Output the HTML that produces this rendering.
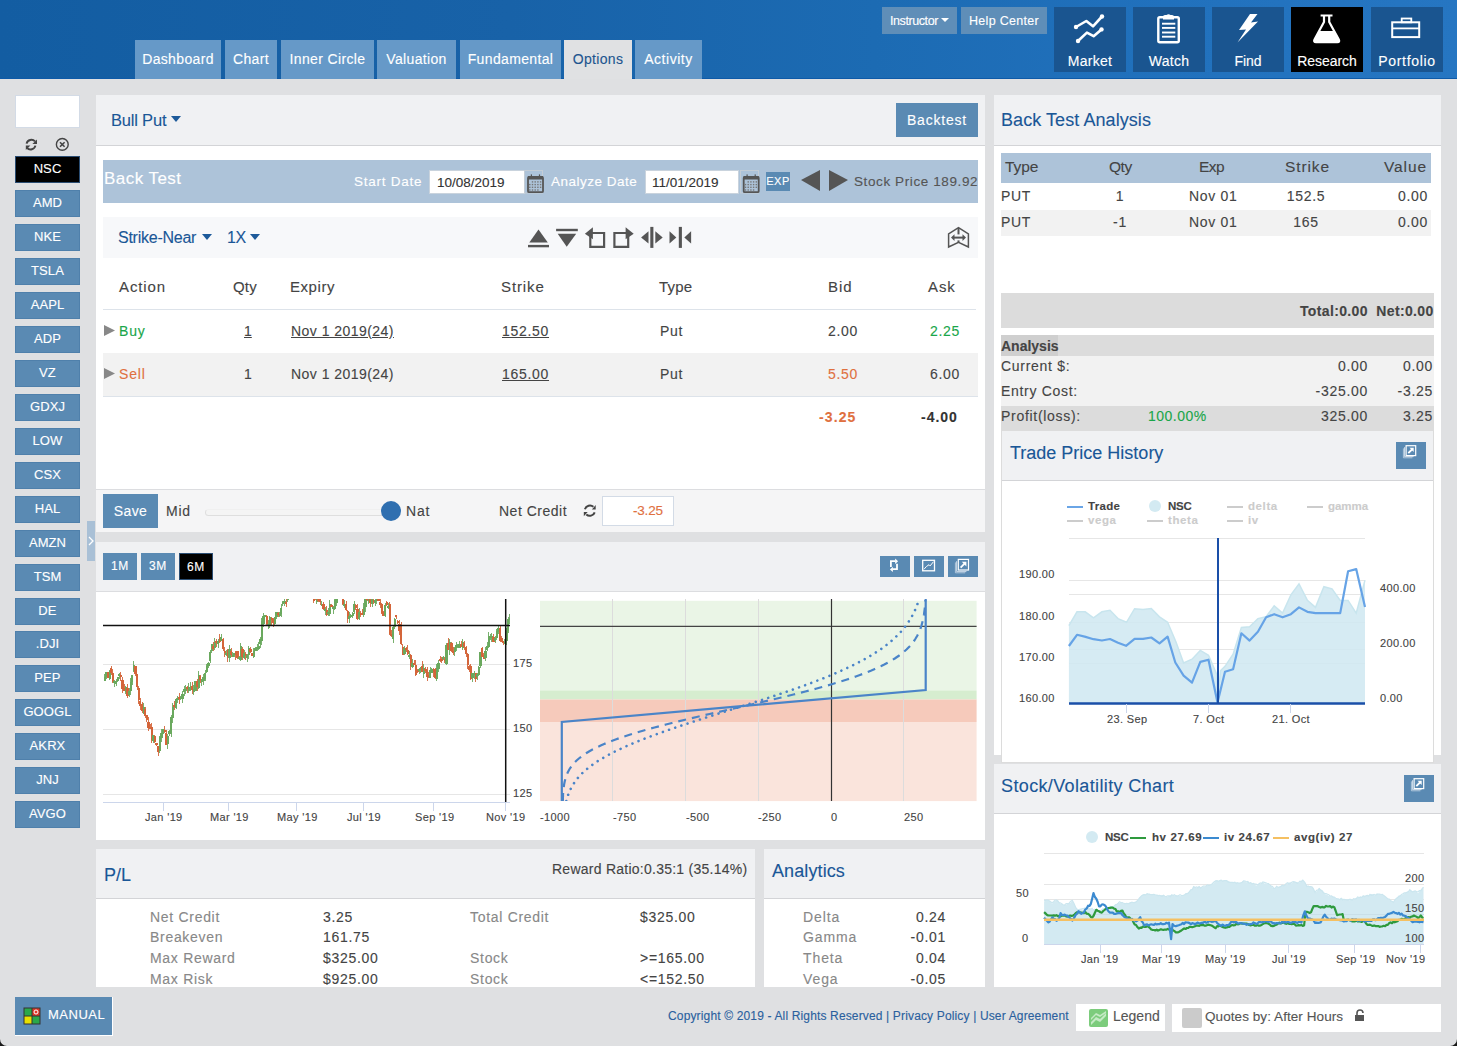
<!DOCTYPE html>
<html><head><meta charset="utf-8">
<style>
*{margin:0;padding:0;box-sizing:border-box}
html,body{width:1457px;height:1046px;overflow:hidden;background:#dfe0e2;font-family:"Liberation Sans",sans-serif;}
body{-webkit-text-stroke:0.12px currentColor}
.a{position:absolute}
.t{position:absolute;line-height:1;white-space:nowrap}
#hdr{position:absolute;left:0;top:0;width:1457px;height:79px;background:linear-gradient(90deg,#135da2 0%,#1862a8 35%,#1c6bb3 60%,#2171bd 80%,#2676c2 100%);border-bottom:1px solid #0e5aa8}
.tab{position:absolute;top:40px;height:39px;background:#6699c8;color:#fff;font-size:14px;letter-spacing:0.35px;text-align:center;line-height:39px}
.tab.on{background:#e0e1e3;color:#1d558f}
.hb{position:absolute;top:7px;height:27px;background:#5f8eb8;color:#fff;font-size:13px;letter-spacing:0.4px;line-height:29px;text-align:center}
.nav{position:absolute;top:7px;width:72px;height:65px;background:#1a5590;color:#fff;font-size:14px;letter-spacing:0.3px;text-align:center}
.nav span{position:absolute;left:0;right:0;top:47px;line-height:14px}
.nav svg{position:absolute;left:0;top:0}
.sym{position:absolute;left:15px;width:65px;height:27px;background:#5a8ab3;color:#fff;font-size:13px;letter-spacing:0.1px;text-align:center;line-height:23px;border:1px solid #4f80ab}
.panel{position:absolute;background:#fff}
.ph{position:absolute;left:0;right:0;top:0;background:#f0f1f3;border-bottom:1px solid #d3d4d7}
.ttl{color:#1a5797}
.btn{position:absolute;background:#5a8ab3;color:#fff;text-align:center}
</style></head><body>
<!-- HEADER -->
<div id="hdr">
  <div class="tab" style="left:135px;width:86px">Dashboard</div>
  <div class="tab" style="left:225px;width:52px">Chart</div>
  <div class="tab" style="left:281px;width:93px">Inner Circle</div>
  <div class="tab" style="left:377px;width:79px">Valuation</div>
  <div class="tab" style="left:460px;width:101px">Fundamental</div>
  <div class="tab on" style="left:564px;width:68px">Options</div>
  <div class="tab" style="left:635px;width:67px;letter-spacing:0.55px">Activity</div>

  <div class="hb" style="left:882px;width:75px;font-size:12.5px;letter-spacing:-0.4px">Instructor <span style="display:inline-block;width:0;height:0;border-left:4px solid transparent;border-right:4px solid transparent;border-top:4px solid #fff;vertical-align:middle;margin-top:-3px"></span></div>
  <div class="hb" style="left:961px;width:86px;font-size:12.5px;letter-spacing:0.3px">Help Center</div>

  <div class="nav" style="left:1054px"><svg width="72" height="46" viewBox="0 0 72 46"><g fill="none" stroke="#fff" stroke-width="2.6" stroke-linecap="round" stroke-linejoin="round"><polyline points="22,20 32.3,14 39,19.3 48,9.5"/><polyline points="24,34 32.9,25.6 39.6,29.2 47.5,22.4"/></g><g fill="#fff"><circle cx="22" cy="20" r="2.2"/><circle cx="48" cy="9.5" r="2.2"/><circle cx="24" cy="34" r="2.2"/><circle cx="47.5" cy="22.4" r="2.2"/></g></svg><span>Market</span></div>
  <div class="nav" style="left:1133px"><svg width="72" height="46" viewBox="0 0 72 46"><rect x="25.3" y="10.3" width="20.5" height="25" rx="1.5" fill="none" stroke="#fff" stroke-width="2.4"/><path d="M30,12.5 V9.5 Q30,8 32,8 H33.5 Q35.5,6.5 37.5,8 H39 Q41,8 41,9.5 V12.5 Z" fill="#fff"/><g stroke="#fff" stroke-width="1.9"><line x1="29" y1="16.7" x2="42.3" y2="16.7"/><line x1="29" y1="20.9" x2="42.3" y2="20.9"/><line x1="29" y1="25.5" x2="42.3" y2="25.5"/><line x1="29" y1="29.7" x2="42.3" y2="29.7"/></g></svg><span>Watch</span></div>
  <div class="nav" style="left:1212px"><svg width="72" height="46" viewBox="0 0 72 46"><polygon points="38,7 45.5,7 39,15.5 46,14.5 25.5,35.5 34,22.5 27,23" fill="#fff"/></svg><span style="letter-spacing:0px">Find</span></div>
  <div class="nav" style="left:1291px;background:#000"><svg width="72" height="46" viewBox="0 0 72 46"><path d="M29.6,8.5 H41.5 M33,8.5 V15 L23.5,32.5 Q22.3,35.2 25,35.2 H46.4 Q49,35.2 47.8,32.5 L38.2,15 V8.5" fill="none" stroke="#fff" stroke-width="2.2" stroke-linejoin="round"/><path d="M28.5,24 H42.8 L48,33 Q48.6,35.5 46,35.6 H25.2 Q22.6,35.5 23.3,33 Z" fill="#fff"/></svg><span style="letter-spacing:-0.05px">Research</span></div>
  <div class="nav" style="left:1371px"><svg width="72" height="46" viewBox="0 0 72 46"><rect x="21.2" y="15.3" width="27" height="14.8" fill="none" stroke="#fff" stroke-width="2"/><line x1="21.2" y1="21.4" x2="48.2" y2="21.4" stroke="#fff" stroke-width="1.8"/><rect x="30.7" y="11.5" width="9.6" height="3.8" fill="none" stroke="#fff" stroke-width="1.8"/></svg><span style="letter-spacing:0.7px">Portfolio</span></div>
</div>

<!-- SIDEBAR -->
<div class="a" style="left:15px;top:95px;width:65px;height:33px;background:#fff;border:1px solid #d3dbe6"></div>
<svg class="a" style="left:20px;top:134px" width="52" height="20" viewBox="0 0 52 20">
  <g fill="none" stroke="#444" stroke-width="2"><path d="M6.6,9.6 A4.9,4.9 0 0 1 15,7.4"/><path d="M15.4,11.6 A4.9,4.9 0 0 1 7,13.8"/></g>
  <polygon points="17,5.4 17,10 12.4,10" fill="#444"/><polygon points="5.8,11.4 5.8,16 10.4,11.4" fill="#444"/>
  <circle cx="42.3" cy="10.4" r="5.9" fill="none" stroke="#444" stroke-width="1.4"/>
  <g stroke="#444" stroke-width="1.6"><line x1="40" y1="8.2" x2="44.6" y2="12.7"/><line x1="44.6" y1="8.2" x2="40" y2="12.7"/></g>
</svg>
<div class="sym" style="top:156px;background:#000;border-color:#2a4d73">NSC</div>
<div class="sym" style="top:190px">AMD</div>
<div class="sym" style="top:224px">NKE</div>
<div class="sym" style="top:258px">TSLA</div>
<div class="sym" style="top:292px">AAPL</div>
<div class="sym" style="top:326px">ADP</div>
<div class="sym" style="top:360px">VZ</div>
<div class="sym" style="top:394px">GDXJ</div>
<div class="sym" style="top:428px">LOW</div>
<div class="sym" style="top:462px">CSX</div>
<div class="sym" style="top:496px">HAL</div>
<div class="sym" style="top:530px">AMZN</div>
<div class="sym" style="top:564px">TSM</div>
<div class="sym" style="top:598px">DE</div>
<div class="sym" style="top:631px">.DJI</div>
<div class="sym" style="top:665px">PEP</div>
<div class="sym" style="top:699px">GOOGL</div>
<div class="sym" style="top:733px">AKRX</div>
<div class="sym" style="top:767px">JNJ</div>
<div class="sym" style="top:801px">AVGO</div>
<div class="a" style="left:87px;top:521px;width:8px;height:40px;background:#a9c0d6"></div>
<svg class="a" style="left:87px;top:534px" width="8" height="14"><polyline points="2,3 6,7 2,11" fill="none" stroke="#fff" stroke-width="1.3"/></svg>


<!-- OPTIONS PANEL -->
<div class="panel" style="left:96px;top:95px;width:889px;height:437px">
  <div class="ph" style="height:51px"></div>
</div>
<div class="t ttl" style="left:111px;top:112px;font-size:16.5px;letter-spacing:-0.2px">Bull Put</div>
<div class="a" style="left:171px;top:116px;width:0;height:0;border-left:5px solid transparent;border-right:5px solid transparent;border-top:6px solid #1d5a9a"></div>
<div class="btn" style="left:896px;top:103px;width:82px;height:34px;font-size:14px;letter-spacing:0.8px;line-height:34px">Backtest</div>

<div class="a" style="left:103px;top:160px;width:875px;height:43px;background:#adc3d9"></div>
<div class="t" style="left:104px;top:170px;font-size:17px;color:#fff;letter-spacing:0.45px">Back Test</div>
<div class="t" style="left:354px;top:175px;font-size:13.5px;color:#fff;letter-spacing:0.75px">Start Date</div>
<div class="a" style="left:429px;top:170px;width:96px;height:24px;background:#fff;border:1px solid #c9d3dd"></div>
<div class="t" style="left:437px;top:176px;font-size:13.5px;color:#333">10/08/2019</div>
<div class="t" style="left:551px;top:175px;font-size:13.5px;color:#fff;letter-spacing:0.5px">Analyze Date</div>
<div class="a" style="left:645px;top:170px;width:94px;height:24px;background:#fff;border:1px solid #c9d3dd"></div>
<div class="t" style="left:652px;top:176px;font-size:13.5px;color:#333">11/01/2019</div>
<div class="a" style="left:766px;top:172px;width:24px;height:19px;background:#5a8ab3;color:#fff;font-size:11px;letter-spacing:0.5px;line-height:19px;text-align:center">EXP</div>
<svg class="a" style="left:800px;top:169px" width="50" height="24"><polygon points="1,11 20,1 20,22" fill="#555"/><polygon points="29,1 48,11 29,22" fill="#555"/></svg>
<div class="t" style="left:854px;top:175px;font-size:13.5px;color:#555;letter-spacing:0.6px">Stock Price 189.92</div>

<div class="a" style="left:103px;top:217px;width:875px;height:41px;background:#f7f8fa"></div>
<div class="t ttl" style="left:118px;top:230px;font-size:16px;letter-spacing:-0.25px">Strike-Near</div>
<div class="a" style="left:202px;top:234px;width:0;height:0;border-left:5px solid transparent;border-right:5px solid transparent;border-top:6px solid #1d5a9a"></div>
<div class="t ttl" style="left:227px;top:230px;font-size:16px;letter-spacing:-0.5px">1X</div>
<div class="a" style="left:250px;top:234px;width:0;height:0;border-left:5px solid transparent;border-right:5px solid transparent;border-top:6px solid #1d5a9a"></div>



<svg class="a" style="left:520px;top:222px" width="180" height="32" viewBox="0 0 180 32">
 <g fill="#555">
  <polygon points="18.5,7.4 9.3,20.4 27.8,20.4"/><rect x="8" y="22.9" width="21" height="2.4"/>
  <rect x="36.1" y="6.8" width="21.7" height="2.4"/><polygon points="37.7,11.7 56.2,11.7 46.7,24.7"/>
  <polygon points="64.9,11.7 72.9,5.2 72.9,17.3"/><polygon points="113.7,11.7 105.6,5.2 105.6,17.3"/>
  <polygon points="121.1,15.4 128.5,9.3 128.5,21.6"/><rect x="130.3" y="4.9" width="3.1" height="21"/><polygon points="142.7,15.4 135.3,9.3 135.3,21.6"/>
  <polygon points="156.3,15.4 149.5,9.3 149.5,21.6"/><rect x="158.8" y="4.9" width="3.1" height="21"/><polygon points="164.3,15.4 171.1,21.6 171.1,9.3"/>
 </g>
 <g fill="none" stroke="#555" stroke-width="2.2">
  <path d="M72,11 H84.1 V24.8 H70.3 V14"/>
  <path d="M106.5,11 H94.4 V24.8 H108.2 V14"/>
 </g>
</svg>
<svg class="a" style="left:940px;top:222px" width="40" height="32" viewBox="0 0 40 32">
 <path d="M18.5,5.6 L8.6,11.8 V25 L18.5,20.4 L28.4,25 V11.8 Z" fill="none" stroke="#555" stroke-width="1.5" stroke-linejoin="miter"/>
 <rect x="17.5" y="6" width="2" height="6.4" fill="#555"/>
 <rect x="13" y="14.6" width="11" height="2" fill="#555"/>
 <polygon points="11,15.6 14.5,12.2 14.5,19" fill="#555"/><polygon points="26,15.6 22.5,12.2 22.5,19" fill="#555"/>
 <rect x="17.5" y="18.4" width="2" height="2" fill="#555"/>
</svg>
<svg class="a" style="left:518px;top:166px" width="250" height="32" viewBox="0 0 250 32">
 <rect x="6.5" y="4.5" width="18" height="22.5" fill="none" stroke="#c4cdd6" stroke-width="1"/>
 <rect x="222.5" y="4.5" width="18" height="22.5" fill="none" stroke="#c4cdd6" stroke-width="1"/>
 <g id="cal">
  <rect x="10" y="11" width="15" height="15.2" rx="1" fill="none" stroke="#555" stroke-width="1.8"/>
  <rect x="10" y="10" width="15" height="3.5" fill="#555"/>
  <rect x="12.8" y="8.4" width="1.2" height="2.6" fill="#555"/><rect x="20.9" y="8.4" width="1.2" height="2.6" fill="#555"/>
  <g fill="#777"><rect x="13.8" y="15.2" width="1.4" height="1.4"/><rect x="16.5" y="15.2" width="1.4" height="1.4"/><rect x="19.2" y="15.2" width="1.4" height="1.4"/><rect x="21.9" y="15.2" width="1.4" height="1.4"/>
  <rect x="11.1" y="17.9" width="1.4" height="1.4"/><rect x="13.8" y="17.9" width="1.4" height="1.4"/><rect x="16.5" y="17.9" width="1.4" height="1.4"/><rect x="19.2" y="17.9" width="1.4" height="1.4"/><rect x="21.9" y="17.9" width="1.4" height="1.4"/>
  <rect x="11.1" y="20.6" width="1.4" height="1.4"/><rect x="13.8" y="20.6" width="1.4" height="1.4"/><rect x="16.5" y="20.6" width="1.4" height="1.4"/><rect x="19.2" y="20.6" width="1.4" height="1.4"/><rect x="21.9" y="20.6" width="1.4" height="1.4"/>
  <rect x="11.1" y="23.3" width="1.4" height="1.4"/><rect x="13.8" y="23.3" width="1.4" height="1.4"/><rect x="16.5" y="23.3" width="1.4" height="1.4"/><rect x="19.2" y="23.3" width="1.4" height="1.4"/></g>
 </g>
 <use href="#cal" x="215.7" y="0"/>
</svg>
<div class="t" style="left:119px;top:279px;font-size:15px;color:#444;letter-spacing:0.9px">Action</div>
<div class="t" style="left:233px;top:279px;font-size:15px;color:#444;letter-spacing:0.2px">Qty</div>
<div class="t" style="left:290px;top:279px;font-size:15px;color:#444;letter-spacing:0.56px">Expiry</div>
<div class="t" style="left:501px;top:279px;font-size:15px;color:#444;letter-spacing:0.9px">Strike</div>
<div class="t" style="left:659px;top:279px;font-size:15px;color:#444;letter-spacing:0.23px">Type</div>
<div class="t" style="left:828px;top:279px;font-size:15px;color:#444;letter-spacing:0.9px">Bid</div>
<div class="t" style="left:928px;top:279px;font-size:15px;color:#444;letter-spacing:0.9px">Ask</div>
<div class="a" style="left:103px;top:309px;width:873px;height:1px;background:#dde3ea"></div>
<div class="a" style="left:103px;top:353px;width:875px;height:44px;background:#f2f2f2;border-bottom:1px solid #dde3ea"></div>
<svg class="a" style="left:104px;top:325px" width="12" height="60"><polygon points="0,0 11,5.5 0,11" fill="#888"/><polygon points="0,43 11,48.5 0,54" fill="#888"/></svg>
<div class="t" style="left:119px;top:324px;font-size:14px;color:#1aa64a;letter-spacing:0.8px">Buy</div>
<div class="t" style="left:244px;top:324px;font-size:14px;color:#444;text-decoration:underline">1</div>
<div class="t" style="left:291px;top:324px;font-size:14px;color:#444;letter-spacing:0.46px;text-decoration:underline">Nov 1 2019(24)</div>
<div class="t" style="left:502px;top:324px;font-size:14px;color:#444;letter-spacing:0.7px;text-decoration:underline">152.50</div>
<div class="t" style="left:660px;top:324px;font-size:14px;color:#444;letter-spacing:0.7px">Put</div>
<div class="t" style="left:828px;top:324px;font-size:14px;color:#444;letter-spacing:0.7px">2.00</div>
<div class="t" style="left:930px;top:324px;font-size:14px;color:#1aa64a;letter-spacing:0.7px">2.25</div>
<div class="t" style="left:119px;top:367px;font-size:14px;color:#e0703f;letter-spacing:0.8px">Sell</div>
<div class="t" style="left:244px;top:367px;font-size:14px;color:#444">1</div>
<div class="t" style="left:291px;top:367px;font-size:14px;color:#444;letter-spacing:0.46px">Nov 1 2019(24)</div>
<div class="t" style="left:502px;top:367px;font-size:14px;color:#444;letter-spacing:0.7px;text-decoration:underline">165.00</div>
<div class="t" style="left:660px;top:367px;font-size:14px;color:#444;letter-spacing:0.7px">Put</div>
<div class="t" style="left:828px;top:367px;font-size:14px;color:#e0703f;letter-spacing:0.7px">5.50</div>
<div class="t" style="left:930px;top:367px;font-size:14px;color:#444;letter-spacing:0.7px">6.00</div>
<div class="t" style="left:819px;top:410px;font-size:14px;color:#e0703f;font-weight:bold;letter-spacing:1.1px">-3.25</div>
<div class="t" style="left:921px;top:410px;font-size:14px;color:#333;font-weight:bold;letter-spacing:1px">-4.00</div>

<div class="a" style="left:96px;top:489px;width:889px;height:43px;background:#f5f5f6;border-top:1px solid #dcdde0"></div>
<div class="btn" style="left:103px;top:494px;width:55px;height:34px;font-size:14px;letter-spacing:0.4px;line-height:34px">Save</div>
<div class="t" style="left:166px;top:504px;font-size:14px;color:#444;letter-spacing:0.8px">Mid</div>
<div class="a" style="left:205px;top:509px;width:182px;height:7px;border-radius:4px;background:#f4f4f4;border:1px solid #dedede;border-top-color:#f0f0f0"></div>
<div class="a" style="left:381px;top:501px;width:20px;height:20px;border-radius:50%;background:#2f6fb0"></div>
<div class="t" style="left:406px;top:504px;font-size:14px;color:#444;letter-spacing:0.8px">Nat</div>
<div class="t" style="left:499px;top:504px;font-size:14px;color:#444;letter-spacing:0.5px">Net Credit</div>
<svg class="a" style="left:575px;top:496px" width="30" height="30" viewBox="0 0 30 30"><g fill="none" stroke="#444" stroke-width="2"><path d="M9.9,13.2 A5.3,5.3 0 0 1 18.4,10.8"/><path d="M19.7,16.3 A5.3,5.3 0 0 1 11.3,18.6"/></g><polygon points="20.7,9 20.7,13.6 16.9,13.6" fill="#444"/><polygon points="8.8,16 8.8,20.2 12.7,16" fill="#444"/></svg>
<div class="a" style="left:602px;top:496px;width:72px;height:30px;background:#fff;border:1px solid #d3dbe6"></div>
<div class="t" style="left:633px;top:504px;font-size:13.5px;color:#e0703f;letter-spacing:-0.2px">-3.25</div>


<!-- CHART PANEL -->
<div class="panel" style="left:96px;top:542px;width:889px;height:298px">
  <div class="ph" style="height:50px;border-bottom-width:1px;border-bottom-color:#dcdde0"></div>
</div>
<div class="btn" style="left:103px;top:553px;width:34px;height:27px;font-size:12px;letter-spacing:0.6px;line-height:27px">1M</div>
<div class="btn" style="left:141px;top:553px;width:34px;height:27px;font-size:12px;letter-spacing:0.6px;line-height:27px">3M</div>
<div class="btn" style="left:179px;top:553px;width:34px;height:27px;font-size:12px;letter-spacing:0.6px;line-height:27px;background:#000;border:1px solid #2a4d73">6M</div>
<div class="btn" style="left:880px;top:556px;width:30px;height:21px"></div>
<div class="btn" style="left:914px;top:556px;width:30px;height:21px"></div>
<div class="btn" style="left:948px;top:556px;width:30px;height:21px"></div>
<svg class="a" style="left:880px;top:556px" width="98" height="21" viewBox="0 0 98 21">
 <g fill="none" stroke="#fff" stroke-width="1.8"><path d="M10.9,11 V5.2 H15.4"/><path d="M17,7.8 V13.2 H12.4"/></g>
 <polygon points="18.1,5.3 15.1,2.6 15.1,8" fill="#fff"/><polygon points="9.9,13.4 12.9,10.8 12.9,16.1" fill="#fff"/>
 <rect x="42.7" y="4.3" width="11.8" height="10.5" fill="none" stroke="#fff" stroke-width="1.3"/>
 <polyline points="44,13.3 46.3,10.6 49,8.7 50.1,9.9 53.5,5.7" fill="none" stroke="#fff" stroke-width="1"/>
 <path d="M76.6,5.2 V15.6 H86.4" fill="none" stroke="#d5e2ee" stroke-width="0.9"/>
 <path d="M75.4,6.4 V16.8 H85.2" fill="none" stroke="#b9cde0" stroke-width="0.9"/>
 <rect x="78.3" y="3.4" width="10.2" height="10.6" fill="none" stroke="#fff" stroke-width="1.2"/>
 <path d="M80.6,11.6 L85,7.2" stroke="#fff" stroke-width="1.8"/><polygon points="86.4,5.8 81.8,5.8 86.4,10.4" fill="#fff"/>
</svg>

<!-- P/L PANEL -->
<div class="panel" style="left:96px;top:849px;width:659px;height:138px">
  <div class="ph" style="height:50px"></div>
</div>
<div class="panel" style="left:764px;top:849px;width:221px;height:138px">
  <div class="ph" style="height:50px"></div>
</div>

<!-- RIGHT PANEL -->
<div class="panel" style="left:994px;top:95px;width:447px;height:660px">
  <div class="ph" style="height:51px"></div>
</div>
<div class="a" style="left:1001px;top:153px;width:430px;height:30px;background:#adc3d9"></div>
<div class="a" style="left:1001px;top:210px;width:430px;height:26px;background:#f2f2f2"></div>
<div class="a" style="left:1001px;top:293px;width:433px;height:35px;background:#dcdcdc"></div>
<div class="a" style="left:1001px;top:335px;width:433px;height:21px;background:#dcdcdc"></div>
<div class="a" style="left:1001px;top:335px;width:57px;height:21px;background:#cfcfcf"></div>
<div class="a" style="left:1001px;top:356px;width:433px;height:50px;background:#f2f2f2"></div>
<div class="a" style="left:1001px;top:406px;width:433px;height:25px;background:#dcdcdc"></div>
<div class="a" style="left:1001px;top:431px;width:433px;height:332px;background:#fff;border:1px solid #dcdcdc;border-top:none">
  <div class="ph" style="height:50px"></div>
</div>
<div class="btn" style="left:1396px;top:442px;width:30px;height:27px"></div>
<svg class="a" style="left:1396px;top:442px" width="30" height="27" viewBox="0 0 30 27"><path d="M8.5,5.2 V14.6 H17.6" fill="none" stroke="#d5e2ee" stroke-width="0.9"/><path d="M7.4,6.4 V15.8 H16.4" fill="none" stroke="#b9cde0" stroke-width="0.9"/><rect x="10.1" y="3.7" width="9.6" height="9.9" fill="none" stroke="#fff" stroke-width="1.2"/><path d="M12.3,11.2 L16.5,7" stroke="#fff" stroke-width="1.8"/><polygon points="17.7,5.7 13.5,5.7 17.7,9.9" fill="#fff"/></svg>

<div class="panel" style="left:994px;top:764px;width:447px;height:223px">
  <div class="ph" style="height:50px"></div>
</div>
<div class="btn" style="left:1404px;top:775px;width:30px;height:27px"></div>
<svg class="a" style="left:1404px;top:775px" width="30" height="27" viewBox="0 0 30 27"><path d="M8.5,5.2 V14.6 H17.6" fill="none" stroke="#d5e2ee" stroke-width="0.9"/><path d="M7.4,6.4 V15.8 H16.4" fill="none" stroke="#b9cde0" stroke-width="0.9"/><rect x="10.1" y="3.7" width="9.6" height="9.9" fill="none" stroke="#fff" stroke-width="1.2"/><path d="M12.3,11.2 L16.5,7" stroke="#fff" stroke-width="1.8"/><polygon points="17.7,5.7 13.5,5.7 17.7,9.9" fill="#fff"/></svg>

<svg class="a" style="left:0;top:0" width="1457" height="1046" viewBox="0 0 1457 1046">
<!-- candle chart grid -->
<g stroke="#e6e6e6" stroke-width="1"><line x1="103" y1="664.5" x2="510" y2="664.5"/><line x1="103" y1="729.5" x2="510" y2="729.5"/><line x1="103" y1="794.5" x2="510" y2="794.5"/></g>
<line x1="103" y1="802.5" x2="510" y2="802.5" stroke="#ccd6eb" stroke-width="1"/>
<g stroke="#ccd6eb" stroke-width="1"><line x1="163.5" y1="802" x2="163.5" y2="811"/><line x1="228.5" y1="802" x2="228.5" y2="811"/><line x1="296.5" y1="802" x2="296.5" y2="811"/><line x1="363.5" y1="802" x2="363.5" y2="811"/><line x1="433.5" y1="802" x2="433.5" y2="811"/><line x1="505.5" y1="802" x2="505.5" y2="811"/></g>
<clipPath id="cc"><rect x="103" y="599" width="407" height="204"/></clipPath>
<g clip-path="url(#cc)" shape-rendering="crispEdges"><line x1="104.7" y1="674.4" x2="104.7" y2="680.9" stroke="#6aa95e" stroke-width="0.9"/><rect x="103.6" y="677.3" width="2.2" height="3.2" fill="#6aa95e"/><line x1="106.3" y1="671.7" x2="106.3" y2="679.3" stroke="#6aa95e" stroke-width="0.9"/><rect x="105.2" y="672.0" width="2.2" height="5.0" fill="#6aa95e"/><line x1="107.9" y1="672.0" x2="107.9" y2="678.3" stroke="#d4653a" stroke-width="0.9"/><rect x="106.8" y="672.4" width="2.2" height="5.5" fill="#d4653a"/><line x1="109.6" y1="670.3" x2="109.6" y2="680.3" stroke="#6aa95e" stroke-width="0.9"/><rect x="108.5" y="670.9" width="2.2" height="8.3" fill="#6aa95e"/><line x1="111.2" y1="665.5" x2="111.2" y2="674.7" stroke="#d4653a" stroke-width="0.9"/><rect x="110.1" y="668.1" width="2.2" height="4.8" fill="#d4653a"/><line x1="112.8" y1="668.9" x2="112.8" y2="683.0" stroke="#d4653a" stroke-width="0.9"/><rect x="111.7" y="672.8" width="2.2" height="8.8" fill="#d4653a"/><line x1="114.4" y1="679.9" x2="114.4" y2="686.9" stroke="#6aa95e" stroke-width="0.9"/><rect x="113.3" y="681.3" width="2.2" height="2.0" fill="#6aa95e"/><line x1="116.0" y1="678.5" x2="116.0" y2="685.8" stroke="#6aa95e" stroke-width="0.9"/><rect x="114.9" y="681.4" width="2.2" height="2.8" fill="#6aa95e"/><line x1="117.7" y1="676.6" x2="117.7" y2="682.1" stroke="#6aa95e" stroke-width="0.9"/><rect x="116.6" y="676.8" width="2.2" height="4.4" fill="#6aa95e"/><line x1="119.3" y1="672.7" x2="119.3" y2="678.7" stroke="#6aa95e" stroke-width="0.9"/><rect x="118.2" y="674.1" width="2.2" height="2.0" fill="#6aa95e"/><line x1="120.9" y1="671.7" x2="120.9" y2="680.6" stroke="#d4653a" stroke-width="0.9"/><rect x="119.8" y="675.3" width="2.2" height="2.1" fill="#d4653a"/><line x1="122.5" y1="677.1" x2="122.5" y2="693.2" stroke="#d4653a" stroke-width="0.9"/><rect x="121.4" y="679.5" width="2.2" height="9.8" fill="#d4653a"/><line x1="124.1" y1="683.6" x2="124.1" y2="691.0" stroke="#d4653a" stroke-width="0.9"/><rect x="123.0" y="688.0" width="2.2" height="2.5" fill="#d4653a"/><line x1="125.8" y1="686.4" x2="125.8" y2="694.0" stroke="#6aa95e" stroke-width="0.9"/><rect x="124.7" y="687.1" width="2.2" height="4.7" fill="#6aa95e"/><line x1="127.4" y1="684.2" x2="127.4" y2="698.1" stroke="#d4653a" stroke-width="0.9"/><rect x="126.3" y="687.7" width="2.2" height="7.9" fill="#d4653a"/><line x1="129.0" y1="688.3" x2="129.0" y2="697.3" stroke="#6aa95e" stroke-width="0.9"/><rect x="127.9" y="691.4" width="2.2" height="3.2" fill="#6aa95e"/><line x1="130.6" y1="677.8" x2="130.6" y2="694.8" stroke="#6aa95e" stroke-width="0.9"/><rect x="129.5" y="681.6" width="2.2" height="9.0" fill="#6aa95e"/><line x1="132.2" y1="674.5" x2="132.2" y2="685.1" stroke="#6aa95e" stroke-width="0.9"/><rect x="131.1" y="674.8" width="2.2" height="7.2" fill="#6aa95e"/><line x1="133.9" y1="661.1" x2="133.9" y2="672.0" stroke="#6aa95e" stroke-width="0.9"/><rect x="132.8" y="664.8" width="2.2" height="5.9" fill="#6aa95e"/><line x1="135.5" y1="666.3" x2="135.5" y2="675.6" stroke="#d4653a" stroke-width="0.9"/><rect x="134.4" y="666.4" width="2.2" height="7.2" fill="#d4653a"/><line x1="137.1" y1="674.0" x2="137.1" y2="690.4" stroke="#d4653a" stroke-width="0.9"/><rect x="136.0" y="674.3" width="2.2" height="12.7" fill="#d4653a"/><line x1="138.7" y1="686.1" x2="138.7" y2="703.7" stroke="#d4653a" stroke-width="0.9"/><rect x="137.6" y="687.9" width="2.2" height="11.9" fill="#d4653a"/><line x1="140.3" y1="698.1" x2="140.3" y2="710.4" stroke="#d4653a" stroke-width="0.9"/><rect x="139.2" y="700.6" width="2.2" height="5.8" fill="#d4653a"/><line x1="142.0" y1="702.3" x2="142.0" y2="712.8" stroke="#d4653a" stroke-width="0.9"/><rect x="140.9" y="703.5" width="2.2" height="7.4" fill="#d4653a"/><line x1="143.6" y1="703.1" x2="143.6" y2="714.2" stroke="#6aa95e" stroke-width="0.9"/><rect x="142.5" y="707.4" width="2.2" height="6.1" fill="#6aa95e"/><line x1="145.2" y1="707.4" x2="145.2" y2="718.0" stroke="#d4653a" stroke-width="0.9"/><rect x="144.1" y="708.5" width="2.2" height="7.4" fill="#d4653a"/><line x1="146.8" y1="715.2" x2="146.8" y2="721.8" stroke="#d4653a" stroke-width="0.9"/><rect x="145.7" y="715.2" width="2.2" height="4.8" fill="#d4653a"/><line x1="148.4" y1="717.2" x2="148.4" y2="730.6" stroke="#d4653a" stroke-width="0.9"/><rect x="147.3" y="721.5" width="2.2" height="6.0" fill="#d4653a"/><line x1="150.1" y1="724.1" x2="150.1" y2="729.4" stroke="#d4653a" stroke-width="0.9"/><rect x="149.0" y="727.1" width="2.2" height="2.0" fill="#d4653a"/><line x1="151.7" y1="723.4" x2="151.7" y2="743.2" stroke="#d4653a" stroke-width="0.9"/><rect x="150.6" y="727.3" width="2.2" height="12.2" fill="#d4653a"/><line x1="153.3" y1="734.9" x2="153.3" y2="743.4" stroke="#6aa95e" stroke-width="0.9"/><rect x="152.2" y="735.3" width="2.2" height="5.2" fill="#6aa95e"/><line x1="154.9" y1="734.6" x2="154.9" y2="742.9" stroke="#d4653a" stroke-width="0.9"/><rect x="153.8" y="735.6" width="2.2" height="6.6" fill="#d4653a"/><line x1="156.5" y1="742.6" x2="156.5" y2="745.8" stroke="#d4653a" stroke-width="0.9"/><rect x="155.4" y="742.6" width="2.2" height="2.5" fill="#d4653a"/><line x1="158.2" y1="745.9" x2="158.2" y2="755.8" stroke="#d4653a" stroke-width="0.9"/><rect x="157.1" y="746.0" width="2.2" height="5.8" fill="#d4653a"/><line x1="159.8" y1="736.1" x2="159.8" y2="752.8" stroke="#6aa95e" stroke-width="0.9"/><rect x="158.7" y="737.2" width="2.2" height="14.0" fill="#6aa95e"/><line x1="161.4" y1="729.3" x2="161.4" y2="742.3" stroke="#6aa95e" stroke-width="0.9"/><rect x="160.3" y="733.2" width="2.2" height="4.7" fill="#6aa95e"/><line x1="163.0" y1="728.5" x2="163.0" y2="734.0" stroke="#6aa95e" stroke-width="0.9"/><rect x="161.9" y="728.9" width="2.2" height="4.6" fill="#6aa95e"/><line x1="164.6" y1="726.2" x2="164.6" y2="732.7" stroke="#d4653a" stroke-width="0.9"/><rect x="163.5" y="730.0" width="2.2" height="2.0" fill="#d4653a"/><line x1="166.3" y1="730.2" x2="166.3" y2="745.2" stroke="#d4653a" stroke-width="0.9"/><rect x="165.2" y="732.5" width="2.2" height="12.0" fill="#d4653a"/><line x1="167.9" y1="733.8" x2="167.9" y2="748.9" stroke="#6aa95e" stroke-width="0.9"/><rect x="166.8" y="736.1" width="2.2" height="8.3" fill="#6aa95e"/><line x1="169.5" y1="730.2" x2="169.5" y2="735.9" stroke="#6aa95e" stroke-width="0.9"/><rect x="168.4" y="731.4" width="2.2" height="2.9" fill="#6aa95e"/><line x1="171.1" y1="714.9" x2="171.1" y2="737.3" stroke="#6aa95e" stroke-width="0.9"/><rect x="170.0" y="717.3" width="2.2" height="16.5" fill="#6aa95e"/><line x1="172.7" y1="703.3" x2="172.7" y2="722.7" stroke="#6aa95e" stroke-width="0.9"/><rect x="171.6" y="706.9" width="2.2" height="11.4" fill="#6aa95e"/><line x1="174.4" y1="700.9" x2="174.4" y2="709.9" stroke="#d4653a" stroke-width="0.9"/><rect x="173.3" y="704.6" width="2.2" height="2.0" fill="#d4653a"/><line x1="176.0" y1="697.5" x2="176.0" y2="708.6" stroke="#6aa95e" stroke-width="0.9"/><rect x="174.9" y="699.1" width="2.2" height="9.3" fill="#6aa95e"/><line x1="177.6" y1="696.4" x2="177.6" y2="702.7" stroke="#6aa95e" stroke-width="0.9"/><rect x="176.5" y="697.6" width="2.2" height="2.0" fill="#6aa95e"/><line x1="179.2" y1="692.8" x2="179.2" y2="703.5" stroke="#d4653a" stroke-width="0.9"/><rect x="178.1" y="697.0" width="2.2" height="2.0" fill="#d4653a"/><line x1="180.8" y1="696.1" x2="180.8" y2="700.1" stroke="#6aa95e" stroke-width="0.9"/><rect x="179.7" y="697.1" width="2.2" height="2.0" fill="#6aa95e"/><line x1="182.5" y1="690.7" x2="182.5" y2="703.0" stroke="#6aa95e" stroke-width="0.9"/><rect x="181.4" y="693.6" width="2.2" height="5.4" fill="#6aa95e"/><line x1="184.1" y1="685.9" x2="184.1" y2="695.6" stroke="#6aa95e" stroke-width="0.9"/><rect x="183.0" y="688.8" width="2.2" height="3.2" fill="#6aa95e"/><line x1="185.7" y1="684.7" x2="185.7" y2="694.3" stroke="#6aa95e" stroke-width="0.9"/><rect x="184.6" y="688.8" width="2.2" height="2.0" fill="#6aa95e"/><line x1="187.3" y1="686.4" x2="187.3" y2="692.7" stroke="#d4653a" stroke-width="0.9"/><rect x="186.2" y="687.2" width="2.2" height="2.0" fill="#d4653a"/><line x1="188.9" y1="683.1" x2="188.9" y2="692.9" stroke="#6aa95e" stroke-width="0.9"/><rect x="187.8" y="687.4" width="2.2" height="3.7" fill="#6aa95e"/><line x1="190.6" y1="682.4" x2="190.6" y2="690.5" stroke="#6aa95e" stroke-width="0.9"/><rect x="189.5" y="685.6" width="2.2" height="4.0" fill="#6aa95e"/><line x1="192.2" y1="682.2" x2="192.2" y2="693.7" stroke="#d4653a" stroke-width="0.9"/><rect x="191.1" y="686.3" width="2.2" height="3.8" fill="#d4653a"/><line x1="193.8" y1="684.7" x2="193.8" y2="695.4" stroke="#6aa95e" stroke-width="0.9"/><rect x="192.7" y="689.1" width="2.2" height="3.3" fill="#6aa95e"/><line x1="195.4" y1="680.8" x2="195.4" y2="690.8" stroke="#6aa95e" stroke-width="0.9"/><rect x="194.3" y="681.4" width="2.2" height="9.3" fill="#6aa95e"/><line x1="197.0" y1="678.6" x2="197.0" y2="691.0" stroke="#d4653a" stroke-width="0.9"/><rect x="195.9" y="681.0" width="2.2" height="5.8" fill="#d4653a"/><line x1="198.7" y1="671.0" x2="198.7" y2="689.0" stroke="#6aa95e" stroke-width="0.9"/><rect x="197.6" y="674.7" width="2.2" height="13.4" fill="#6aa95e"/><line x1="200.3" y1="675.0" x2="200.3" y2="682.6" stroke="#d4653a" stroke-width="0.9"/><rect x="199.2" y="676.0" width="2.2" height="3.9" fill="#d4653a"/><line x1="201.9" y1="678.7" x2="201.9" y2="685.7" stroke="#6aa95e" stroke-width="0.9"/><rect x="200.8" y="679.3" width="2.2" height="2.3" fill="#6aa95e"/><line x1="203.5" y1="674.3" x2="203.5" y2="684.8" stroke="#6aa95e" stroke-width="0.9"/><rect x="202.4" y="677.0" width="2.2" height="3.8" fill="#6aa95e"/><line x1="205.1" y1="670.2" x2="205.1" y2="681.1" stroke="#6aa95e" stroke-width="0.9"/><rect x="204.0" y="672.5" width="2.2" height="6.2" fill="#6aa95e"/><line x1="206.8" y1="663.8" x2="206.8" y2="673.2" stroke="#6aa95e" stroke-width="0.9"/><rect x="205.7" y="665.8" width="2.2" height="6.6" fill="#6aa95e"/><line x1="208.4" y1="662.0" x2="208.4" y2="668.0" stroke="#6aa95e" stroke-width="0.9"/><rect x="207.3" y="662.8" width="2.2" height="3.1" fill="#6aa95e"/><line x1="210.0" y1="650.2" x2="210.0" y2="663.1" stroke="#6aa95e" stroke-width="0.9"/><rect x="208.9" y="651.6" width="2.2" height="9.1" fill="#6aa95e"/><line x1="211.6" y1="643.8" x2="211.6" y2="653.2" stroke="#6aa95e" stroke-width="0.9"/><rect x="210.5" y="644.3" width="2.2" height="6.4" fill="#6aa95e"/><line x1="213.2" y1="642.1" x2="213.2" y2="650.8" stroke="#d4653a" stroke-width="0.9"/><rect x="212.1" y="645.6" width="2.2" height="2.9" fill="#d4653a"/><line x1="214.9" y1="638.3" x2="214.9" y2="649.5" stroke="#6aa95e" stroke-width="0.9"/><rect x="213.8" y="642.4" width="2.2" height="5.1" fill="#6aa95e"/><line x1="216.5" y1="638.8" x2="216.5" y2="646.5" stroke="#d4653a" stroke-width="0.9"/><rect x="215.4" y="641.1" width="2.2" height="2.3" fill="#d4653a"/><line x1="218.1" y1="639.3" x2="218.1" y2="648.2" stroke="#6aa95e" stroke-width="0.9"/><rect x="217.0" y="641.4" width="2.2" height="2.5" fill="#6aa95e"/><line x1="219.7" y1="634.1" x2="219.7" y2="643.3" stroke="#d4653a" stroke-width="0.9"/><rect x="218.6" y="638.3" width="2.2" height="3.8" fill="#d4653a"/><line x1="221.3" y1="633.6" x2="221.3" y2="641.3" stroke="#6aa95e" stroke-width="0.9"/><rect x="220.2" y="637.3" width="2.2" height="3.4" fill="#6aa95e"/><line x1="223.0" y1="638.2" x2="223.0" y2="650.5" stroke="#d4653a" stroke-width="0.9"/><rect x="221.9" y="638.5" width="2.2" height="10.9" fill="#d4653a"/><line x1="224.6" y1="646.9" x2="224.6" y2="657.2" stroke="#d4653a" stroke-width="0.9"/><rect x="223.5" y="650.5" width="2.2" height="2.7" fill="#d4653a"/><line x1="226.2" y1="649.9" x2="226.2" y2="655.9" stroke="#6aa95e" stroke-width="0.9"/><rect x="225.1" y="652.8" width="2.2" height="2.4" fill="#6aa95e"/><line x1="227.8" y1="649.0" x2="227.8" y2="661.5" stroke="#d4653a" stroke-width="0.9"/><rect x="226.7" y="650.0" width="2.2" height="7.2" fill="#d4653a"/><line x1="229.4" y1="644.7" x2="229.4" y2="662.1" stroke="#6aa95e" stroke-width="0.9"/><rect x="228.3" y="649.2" width="2.2" height="9.2" fill="#6aa95e"/><line x1="231.1" y1="648.3" x2="231.1" y2="656.8" stroke="#d4653a" stroke-width="0.9"/><rect x="230.0" y="650.6" width="2.2" height="4.6" fill="#d4653a"/><line x1="232.7" y1="651.9" x2="232.7" y2="657.2" stroke="#6aa95e" stroke-width="0.9"/><rect x="231.6" y="655.1" width="2.2" height="2.0" fill="#6aa95e"/><line x1="234.3" y1="652.9" x2="234.3" y2="656.6" stroke="#6aa95e" stroke-width="0.9"/><rect x="233.2" y="652.9" width="2.2" height="2.1" fill="#6aa95e"/><line x1="235.9" y1="651.3" x2="235.9" y2="659.5" stroke="#d4653a" stroke-width="0.9"/><rect x="234.8" y="651.6" width="2.2" height="3.5" fill="#d4653a"/><line x1="237.5" y1="650.5" x2="237.5" y2="659.0" stroke="#d4653a" stroke-width="0.9"/><rect x="236.4" y="650.9" width="2.2" height="6.8" fill="#d4653a"/><line x1="239.2" y1="655.9" x2="239.2" y2="659.7" stroke="#6aa95e" stroke-width="0.9"/><rect x="238.1" y="657.2" width="2.2" height="2.0" fill="#6aa95e"/><line x1="240.8" y1="642.7" x2="240.8" y2="660.7" stroke="#6aa95e" stroke-width="0.9"/><rect x="239.7" y="646.3" width="2.2" height="13.2" fill="#6aa95e"/><line x1="242.4" y1="646.7" x2="242.4" y2="660.4" stroke="#d4653a" stroke-width="0.9"/><rect x="241.3" y="649.2" width="2.2" height="8.0" fill="#d4653a"/><line x1="244.0" y1="649.8" x2="244.0" y2="659.4" stroke="#6aa95e" stroke-width="0.9"/><rect x="242.9" y="652.9" width="2.2" height="4.6" fill="#6aa95e"/><line x1="245.6" y1="651.5" x2="245.6" y2="659.9" stroke="#d4653a" stroke-width="0.9"/><rect x="244.5" y="654.3" width="2.2" height="2.0" fill="#d4653a"/><line x1="247.3" y1="654.3" x2="247.3" y2="661.6" stroke="#6aa95e" stroke-width="0.9"/><rect x="246.2" y="654.6" width="2.2" height="3.1" fill="#6aa95e"/><line x1="248.9" y1="645.5" x2="248.9" y2="659.2" stroke="#6aa95e" stroke-width="0.9"/><rect x="247.8" y="648.0" width="2.2" height="7.0" fill="#6aa95e"/><line x1="250.5" y1="646.5" x2="250.5" y2="653.3" stroke="#d4653a" stroke-width="0.9"/><rect x="249.4" y="648.8" width="2.2" height="3.4" fill="#d4653a"/><line x1="252.1" y1="652.6" x2="252.1" y2="656.4" stroke="#d4653a" stroke-width="0.9"/><rect x="251.0" y="652.8" width="2.2" height="2.7" fill="#d4653a"/><line x1="253.7" y1="647.8" x2="253.7" y2="658.1" stroke="#6aa95e" stroke-width="0.9"/><rect x="252.6" y="651.2" width="2.2" height="5.5" fill="#6aa95e"/><line x1="255.4" y1="646.5" x2="255.4" y2="651.3" stroke="#6aa95e" stroke-width="0.9"/><rect x="254.3" y="648.1" width="2.2" height="3.1" fill="#6aa95e"/><line x1="257.0" y1="643.6" x2="257.0" y2="651.4" stroke="#6aa95e" stroke-width="0.9"/><rect x="255.9" y="646.9" width="2.2" height="2.0" fill="#6aa95e"/><line x1="258.6" y1="641.5" x2="258.6" y2="649.7" stroke="#6aa95e" stroke-width="0.9"/><rect x="257.5" y="645.7" width="2.2" height="3.4" fill="#6aa95e"/><line x1="260.2" y1="637.1" x2="260.2" y2="648.0" stroke="#6aa95e" stroke-width="0.9"/><rect x="259.1" y="639.3" width="2.2" height="4.9" fill="#6aa95e"/><line x1="261.8" y1="618.1" x2="261.8" y2="645.0" stroke="#6aa95e" stroke-width="0.9"/><rect x="260.7" y="621.2" width="2.2" height="19.3" fill="#6aa95e"/><line x1="263.5" y1="612.5" x2="263.5" y2="626.6" stroke="#6aa95e" stroke-width="0.9"/><rect x="262.4" y="615.7" width="2.2" height="8.0" fill="#6aa95e"/><line x1="265.1" y1="614.5" x2="265.1" y2="617.3" stroke="#6aa95e" stroke-width="0.9"/><rect x="264.0" y="614.8" width="2.2" height="2.0" fill="#6aa95e"/><line x1="266.7" y1="615.0" x2="266.7" y2="624.5" stroke="#d4653a" stroke-width="0.9"/><rect x="265.6" y="616.1" width="2.2" height="7.7" fill="#d4653a"/><line x1="268.3" y1="620.0" x2="268.3" y2="628.9" stroke="#6aa95e" stroke-width="0.9"/><rect x="267.2" y="623.9" width="2.2" height="2.0" fill="#6aa95e"/><line x1="269.9" y1="615.8" x2="269.9" y2="627.7" stroke="#6aa95e" stroke-width="0.9"/><rect x="268.8" y="617.1" width="2.2" height="8.6" fill="#6aa95e"/><line x1="271.6" y1="617.0" x2="271.6" y2="624.5" stroke="#d4653a" stroke-width="0.9"/><rect x="270.5" y="618.1" width="2.2" height="2.0" fill="#d4653a"/><line x1="273.2" y1="618.3" x2="273.2" y2="627.2" stroke="#d4653a" stroke-width="0.9"/><rect x="272.1" y="619.4" width="2.2" height="3.4" fill="#d4653a"/><line x1="274.8" y1="616.7" x2="274.8" y2="626.0" stroke="#6aa95e" stroke-width="0.9"/><rect x="273.7" y="616.7" width="2.2" height="7.6" fill="#6aa95e"/><line x1="276.4" y1="611.5" x2="276.4" y2="619.3" stroke="#6aa95e" stroke-width="0.9"/><rect x="275.3" y="612.4" width="2.2" height="4.6" fill="#6aa95e"/><line x1="278.0" y1="612.1" x2="278.0" y2="616.6" stroke="#d4653a" stroke-width="0.9"/><rect x="276.9" y="612.5" width="2.2" height="2.3" fill="#d4653a"/><line x1="279.7" y1="612.4" x2="279.7" y2="616.8" stroke="#6aa95e" stroke-width="0.9"/><rect x="278.6" y="613.8" width="2.2" height="2.0" fill="#6aa95e"/><line x1="281.3" y1="604.1" x2="281.3" y2="616.6" stroke="#6aa95e" stroke-width="0.9"/><rect x="280.2" y="607.5" width="2.2" height="6.2" fill="#6aa95e"/><line x1="282.9" y1="600.5" x2="282.9" y2="605.7" stroke="#6aa95e" stroke-width="0.9"/><rect x="281.8" y="602.2" width="2.2" height="2.1" fill="#6aa95e"/><line x1="284.5" y1="597.7" x2="284.5" y2="605.8" stroke="#6aa95e" stroke-width="0.9"/><rect x="283.4" y="600.9" width="2.2" height="2.0" fill="#6aa95e"/><line x1="286.1" y1="597.7" x2="286.1" y2="606.5" stroke="#d4653a" stroke-width="0.9"/><rect x="285.0" y="601.7" width="2.2" height="2.0" fill="#d4653a"/><line x1="287.8" y1="593.0" x2="287.8" y2="602.2" stroke="#6aa95e" stroke-width="0.9"/><rect x="286.7" y="593.6" width="2.2" height="6.2" fill="#6aa95e"/><line x1="289.4" y1="581.8" x2="289.4" y2="597.3" stroke="#6aa95e" stroke-width="0.9"/><rect x="288.3" y="585.5" width="2.2" height="8.1" fill="#6aa95e"/><line x1="291.0" y1="579.8" x2="291.0" y2="588.0" stroke="#d4653a" stroke-width="0.9"/><rect x="289.9" y="582.9" width="2.2" height="2.0" fill="#d4653a"/><line x1="292.6" y1="583.7" x2="292.6" y2="591.0" stroke="#d4653a" stroke-width="0.9"/><rect x="291.5" y="584.3" width="2.2" height="5.1" fill="#d4653a"/><line x1="294.2" y1="588.8" x2="294.2" y2="596.5" stroke="#d4653a" stroke-width="0.9"/><rect x="293.1" y="591.3" width="2.2" height="2.4" fill="#d4653a"/><line x1="295.9" y1="582.7" x2="295.9" y2="591.9" stroke="#6aa95e" stroke-width="0.9"/><rect x="294.8" y="584.9" width="2.2" height="7.0" fill="#6aa95e"/><line x1="297.5" y1="580.1" x2="297.5" y2="591.8" stroke="#d4653a" stroke-width="0.9"/><rect x="296.4" y="582.4" width="2.2" height="7.0" fill="#d4653a"/><line x1="299.1" y1="583.4" x2="299.1" y2="590.1" stroke="#6aa95e" stroke-width="0.9"/><rect x="298.0" y="586.7" width="2.2" height="2.2" fill="#6aa95e"/><line x1="300.7" y1="584.0" x2="300.7" y2="590.4" stroke="#d4653a" stroke-width="0.9"/><rect x="299.6" y="587.3" width="2.2" height="2.2" fill="#d4653a"/><line x1="302.3" y1="582.9" x2="302.3" y2="589.2" stroke="#d4653a" stroke-width="0.9"/><rect x="301.2" y="585.1" width="2.2" height="2.4" fill="#d4653a"/><line x1="304.0" y1="580.6" x2="304.0" y2="590.6" stroke="#6aa95e" stroke-width="0.9"/><rect x="302.9" y="584.0" width="2.2" height="3.8" fill="#6aa95e"/><line x1="305.6" y1="582.9" x2="305.6" y2="590.0" stroke="#d4653a" stroke-width="0.9"/><rect x="304.5" y="583.5" width="2.2" height="5.3" fill="#d4653a"/><line x1="307.2" y1="584.9" x2="307.2" y2="590.4" stroke="#d4653a" stroke-width="0.9"/><rect x="306.1" y="587.5" width="2.2" height="2.9" fill="#d4653a"/><line x1="308.8" y1="587.8" x2="308.8" y2="596.7" stroke="#d4653a" stroke-width="0.9"/><rect x="307.7" y="590.8" width="2.2" height="2.8" fill="#d4653a"/><line x1="310.4" y1="588.3" x2="310.4" y2="594.7" stroke="#6aa95e" stroke-width="0.9"/><rect x="309.3" y="590.7" width="2.2" height="2.0" fill="#6aa95e"/><line x1="312.1" y1="586.2" x2="312.1" y2="593.1" stroke="#d4653a" stroke-width="0.9"/><rect x="311.0" y="590.2" width="2.2" height="2.0" fill="#d4653a"/><line x1="313.7" y1="590.7" x2="313.7" y2="603.2" stroke="#d4653a" stroke-width="0.9"/><rect x="312.6" y="590.8" width="2.2" height="10.3" fill="#d4653a"/><line x1="315.3" y1="594.7" x2="315.3" y2="599.9" stroke="#d4653a" stroke-width="0.9"/><rect x="314.2" y="596.7" width="2.2" height="2.0" fill="#d4653a"/><line x1="316.9" y1="596.9" x2="316.9" y2="604.4" stroke="#6aa95e" stroke-width="0.9"/><rect x="315.8" y="597.8" width="2.2" height="4.0" fill="#6aa95e"/><line x1="318.5" y1="594.7" x2="318.5" y2="601.6" stroke="#d4653a" stroke-width="0.9"/><rect x="317.4" y="599.0" width="2.2" height="2.0" fill="#d4653a"/><line x1="320.2" y1="594.9" x2="320.2" y2="605.3" stroke="#d4653a" stroke-width="0.9"/><rect x="319.1" y="598.9" width="2.2" height="3.2" fill="#d4653a"/><line x1="321.8" y1="601.4" x2="321.8" y2="605.7" stroke="#6aa95e" stroke-width="0.9"/><rect x="320.7" y="603.6" width="2.2" height="2.0" fill="#6aa95e"/><line x1="323.4" y1="601.6" x2="323.4" y2="610.3" stroke="#d4653a" stroke-width="0.9"/><rect x="322.3" y="603.7" width="2.2" height="5.3" fill="#d4653a"/><line x1="325.0" y1="607.4" x2="325.0" y2="614.6" stroke="#6aa95e" stroke-width="0.9"/><rect x="323.9" y="608.8" width="2.2" height="2.0" fill="#6aa95e"/><line x1="326.6" y1="605.7" x2="326.6" y2="615.8" stroke="#d4653a" stroke-width="0.9"/><rect x="325.5" y="609.5" width="2.2" height="5.8" fill="#d4653a"/><line x1="328.3" y1="608.2" x2="328.3" y2="615.6" stroke="#6aa95e" stroke-width="0.9"/><rect x="327.2" y="612.3" width="2.2" height="2.0" fill="#6aa95e"/><line x1="329.9" y1="599.6" x2="329.9" y2="616.2" stroke="#6aa95e" stroke-width="0.9"/><rect x="328.8" y="604.0" width="2.2" height="9.5" fill="#6aa95e"/><line x1="331.5" y1="603.7" x2="331.5" y2="607.2" stroke="#d4653a" stroke-width="0.9"/><rect x="330.4" y="604.9" width="2.2" height="2.0" fill="#d4653a"/><line x1="333.1" y1="606.0" x2="333.1" y2="613.5" stroke="#6aa95e" stroke-width="0.9"/><rect x="332.0" y="607.3" width="2.2" height="2.0" fill="#6aa95e"/><line x1="334.7" y1="597.3" x2="334.7" y2="610.3" stroke="#6aa95e" stroke-width="0.9"/><rect x="333.6" y="599.6" width="2.2" height="9.8" fill="#6aa95e"/><line x1="336.4" y1="587.9" x2="336.4" y2="606.1" stroke="#6aa95e" stroke-width="0.9"/><rect x="335.3" y="591.9" width="2.2" height="10.6" fill="#6aa95e"/><line x1="338.0" y1="585.0" x2="338.0" y2="594.7" stroke="#d4653a" stroke-width="0.9"/><rect x="336.9" y="589.3" width="2.2" height="2.9" fill="#d4653a"/><line x1="339.6" y1="588.4" x2="339.6" y2="598.8" stroke="#d4653a" stroke-width="0.9"/><rect x="338.5" y="591.7" width="2.2" height="5.1" fill="#d4653a"/><line x1="341.2" y1="593.2" x2="341.2" y2="598.5" stroke="#d4653a" stroke-width="0.9"/><rect x="340.1" y="594.5" width="2.2" height="3.8" fill="#d4653a"/><line x1="342.8" y1="595.8" x2="342.8" y2="605.0" stroke="#d4653a" stroke-width="0.9"/><rect x="341.7" y="597.9" width="2.2" height="5.6" fill="#d4653a"/><line x1="344.5" y1="600.0" x2="344.5" y2="607.5" stroke="#6aa95e" stroke-width="0.9"/><rect x="343.4" y="604.4" width="2.2" height="2.0" fill="#6aa95e"/><line x1="346.1" y1="601.1" x2="346.1" y2="611.4" stroke="#d4653a" stroke-width="0.9"/><rect x="345.0" y="603.6" width="2.2" height="6.0" fill="#d4653a"/><line x1="347.7" y1="609.5" x2="347.7" y2="622.7" stroke="#d4653a" stroke-width="0.9"/><rect x="346.6" y="610.5" width="2.2" height="8.2" fill="#d4653a"/><line x1="349.3" y1="612.2" x2="349.3" y2="623.1" stroke="#6aa95e" stroke-width="0.9"/><rect x="348.2" y="616.3" width="2.2" height="2.4" fill="#6aa95e"/><line x1="350.9" y1="614.3" x2="350.9" y2="617.5" stroke="#6aa95e" stroke-width="0.9"/><rect x="349.8" y="615.1" width="2.2" height="2.0" fill="#6aa95e"/><line x1="352.6" y1="612.2" x2="352.6" y2="617.5" stroke="#6aa95e" stroke-width="0.9"/><rect x="351.5" y="613.2" width="2.2" height="3.1" fill="#6aa95e"/><line x1="354.2" y1="600.8" x2="354.2" y2="613.7" stroke="#6aa95e" stroke-width="0.9"/><rect x="353.1" y="604.2" width="2.2" height="7.6" fill="#6aa95e"/><line x1="355.8" y1="603.5" x2="355.8" y2="609.5" stroke="#d4653a" stroke-width="0.9"/><rect x="354.7" y="605.2" width="2.2" height="2.8" fill="#d4653a"/><line x1="357.4" y1="604.1" x2="357.4" y2="619.7" stroke="#d4653a" stroke-width="0.9"/><rect x="356.3" y="608.5" width="2.2" height="10.6" fill="#d4653a"/><line x1="359.0" y1="608.4" x2="359.0" y2="620.0" stroke="#6aa95e" stroke-width="0.9"/><rect x="357.9" y="612.3" width="2.2" height="6.8" fill="#6aa95e"/><line x1="360.7" y1="611.3" x2="360.7" y2="617.1" stroke="#d4653a" stroke-width="0.9"/><rect x="359.6" y="613.1" width="2.2" height="2.0" fill="#d4653a"/><line x1="362.3" y1="609.2" x2="362.3" y2="615.2" stroke="#d4653a" stroke-width="0.9"/><rect x="361.2" y="613.1" width="2.2" height="2.0" fill="#d4653a"/><line x1="363.9" y1="603.4" x2="363.9" y2="616.9" stroke="#6aa95e" stroke-width="0.9"/><rect x="362.8" y="607.4" width="2.2" height="7.4" fill="#6aa95e"/><line x1="365.5" y1="596.1" x2="365.5" y2="611.6" stroke="#6aa95e" stroke-width="0.9"/><rect x="364.4" y="597.9" width="2.2" height="9.5" fill="#6aa95e"/><line x1="367.1" y1="590.7" x2="367.1" y2="601.2" stroke="#d4653a" stroke-width="0.9"/><rect x="366.0" y="595.1" width="2.2" height="5.0" fill="#d4653a"/><line x1="368.8" y1="595.6" x2="368.8" y2="603.7" stroke="#6aa95e" stroke-width="0.9"/><rect x="367.7" y="598.0" width="2.2" height="2.7" fill="#6aa95e"/><line x1="370.4" y1="594.1" x2="370.4" y2="606.7" stroke="#d4653a" stroke-width="0.9"/><rect x="369.3" y="597.0" width="2.2" height="6.3" fill="#d4653a"/><line x1="372.0" y1="596.5" x2="372.0" y2="607.4" stroke="#6aa95e" stroke-width="0.9"/><rect x="370.9" y="596.7" width="2.2" height="7.1" fill="#6aa95e"/><line x1="373.6" y1="597.2" x2="373.6" y2="603.5" stroke="#d4653a" stroke-width="0.9"/><rect x="372.5" y="600.1" width="2.2" height="2.0" fill="#d4653a"/><line x1="375.2" y1="597.5" x2="375.2" y2="606.0" stroke="#6aa95e" stroke-width="0.9"/><rect x="374.1" y="600.3" width="2.2" height="2.5" fill="#6aa95e"/><line x1="376.9" y1="596.7" x2="376.9" y2="603.6" stroke="#6aa95e" stroke-width="0.9"/><rect x="375.8" y="599.0" width="2.2" height="2.0" fill="#6aa95e"/><line x1="378.5" y1="596.6" x2="378.5" y2="601.4" stroke="#d4653a" stroke-width="0.9"/><rect x="377.4" y="599.3" width="2.2" height="2.0" fill="#d4653a"/><line x1="380.1" y1="598.0" x2="380.1" y2="608.1" stroke="#d4653a" stroke-width="0.9"/><rect x="379.0" y="602.3" width="2.2" height="2.9" fill="#d4653a"/><line x1="381.7" y1="602.9" x2="381.7" y2="613.9" stroke="#d4653a" stroke-width="0.9"/><rect x="380.6" y="604.0" width="2.2" height="8.8" fill="#d4653a"/><line x1="383.3" y1="610.8" x2="383.3" y2="615.8" stroke="#d4653a" stroke-width="0.9"/><rect x="382.2" y="612.2" width="2.2" height="3.5" fill="#d4653a"/><line x1="385.0" y1="603.4" x2="385.0" y2="616.9" stroke="#6aa95e" stroke-width="0.9"/><rect x="383.9" y="605.3" width="2.2" height="10.4" fill="#6aa95e"/><line x1="386.6" y1="601.2" x2="386.6" y2="605.6" stroke="#d4653a" stroke-width="0.9"/><rect x="385.5" y="602.2" width="2.2" height="3.2" fill="#d4653a"/><line x1="388.2" y1="602.6" x2="388.2" y2="608.5" stroke="#6aa95e" stroke-width="0.9"/><rect x="387.1" y="605.6" width="2.2" height="2.0" fill="#6aa95e"/><line x1="389.8" y1="601.6" x2="389.8" y2="634.8" stroke="#d4653a" stroke-width="0.9"/><rect x="388.7" y="603.9" width="2.2" height="29.9" fill="#d4653a"/><line x1="391.4" y1="629.9" x2="391.4" y2="637.0" stroke="#d4653a" stroke-width="0.9"/><rect x="390.3" y="633.6" width="2.2" height="2.4" fill="#d4653a"/><line x1="393.1" y1="625.6" x2="393.1" y2="642.9" stroke="#6aa95e" stroke-width="0.9"/><rect x="392.0" y="626.9" width="2.2" height="11.7" fill="#6aa95e"/><line x1="394.7" y1="618.3" x2="394.7" y2="628.8" stroke="#6aa95e" stroke-width="0.9"/><rect x="393.6" y="619.3" width="2.2" height="7.7" fill="#6aa95e"/><line x1="396.3" y1="614.5" x2="396.3" y2="618.9" stroke="#d4653a" stroke-width="0.9"/><rect x="395.2" y="615.1" width="2.2" height="2.0" fill="#d4653a"/><line x1="397.9" y1="619.9" x2="397.9" y2="623.5" stroke="#d4653a" stroke-width="0.9"/><rect x="396.8" y="620.5" width="2.2" height="2.8" fill="#d4653a"/><line x1="399.5" y1="619.9" x2="399.5" y2="635.3" stroke="#d4653a" stroke-width="0.9"/><rect x="398.4" y="623.9" width="2.2" height="7.4" fill="#d4653a"/><line x1="401.2" y1="621.6" x2="401.2" y2="645.2" stroke="#d4653a" stroke-width="0.9"/><rect x="400.1" y="625.8" width="2.2" height="17.9" fill="#d4653a"/><line x1="402.8" y1="643.8" x2="402.8" y2="655.0" stroke="#d4653a" stroke-width="0.9"/><rect x="401.7" y="647.1" width="2.2" height="7.7" fill="#d4653a"/><line x1="404.4" y1="646.1" x2="404.4" y2="655.0" stroke="#6aa95e" stroke-width="0.9"/><rect x="403.3" y="647.8" width="2.2" height="5.7" fill="#6aa95e"/><line x1="406.0" y1="646.6" x2="406.0" y2="651.6" stroke="#d4653a" stroke-width="0.9"/><rect x="404.9" y="647.9" width="2.2" height="2.1" fill="#d4653a"/><line x1="407.6" y1="645.4" x2="407.6" y2="655.1" stroke="#d4653a" stroke-width="0.9"/><rect x="406.5" y="649.8" width="2.2" height="4.4" fill="#d4653a"/><line x1="409.3" y1="650.9" x2="409.3" y2="658.5" stroke="#6aa95e" stroke-width="0.9"/><rect x="408.2" y="654.6" width="2.2" height="2.0" fill="#6aa95e"/><line x1="410.9" y1="653.5" x2="410.9" y2="670.1" stroke="#d4653a" stroke-width="0.9"/><rect x="409.8" y="655.2" width="2.2" height="10.8" fill="#d4653a"/><line x1="412.5" y1="658.5" x2="412.5" y2="667.5" stroke="#6aa95e" stroke-width="0.9"/><rect x="411.4" y="662.5" width="2.2" height="4.8" fill="#6aa95e"/><line x1="414.1" y1="659.8" x2="414.1" y2="665.4" stroke="#d4653a" stroke-width="0.9"/><rect x="413.0" y="663.2" width="2.2" height="2.0" fill="#d4653a"/><line x1="415.7" y1="660.3" x2="415.7" y2="675.6" stroke="#d4653a" stroke-width="0.9"/><rect x="414.6" y="664.5" width="2.2" height="10.0" fill="#d4653a"/><line x1="417.4" y1="668.7" x2="417.4" y2="673.4" stroke="#d4653a" stroke-width="0.9"/><rect x="416.3" y="670.2" width="2.2" height="2.0" fill="#d4653a"/><line x1="419.0" y1="667.6" x2="419.0" y2="674.0" stroke="#6aa95e" stroke-width="0.9"/><rect x="417.9" y="668.7" width="2.2" height="2.0" fill="#6aa95e"/><line x1="420.6" y1="666.7" x2="420.6" y2="673.3" stroke="#6aa95e" stroke-width="0.9"/><rect x="419.5" y="666.7" width="2.2" height="3.2" fill="#6aa95e"/><line x1="422.2" y1="661.4" x2="422.2" y2="672.0" stroke="#d4653a" stroke-width="0.9"/><rect x="421.1" y="665.6" width="2.2" height="6.3" fill="#d4653a"/><line x1="423.8" y1="663.5" x2="423.8" y2="678.0" stroke="#6aa95e" stroke-width="0.9"/><rect x="422.7" y="667.8" width="2.2" height="5.9" fill="#6aa95e"/><line x1="425.5" y1="666.6" x2="425.5" y2="673.0" stroke="#d4653a" stroke-width="0.9"/><rect x="424.4" y="668.6" width="2.2" height="2.2" fill="#d4653a"/><line x1="427.1" y1="666.7" x2="427.1" y2="680.5" stroke="#d4653a" stroke-width="0.9"/><rect x="426.0" y="670.3" width="2.2" height="6.8" fill="#d4653a"/><line x1="428.7" y1="671.9" x2="428.7" y2="678.1" stroke="#d4653a" stroke-width="0.9"/><rect x="427.6" y="674.7" width="2.2" height="2.0" fill="#d4653a"/><line x1="430.3" y1="666.5" x2="430.3" y2="678.4" stroke="#6aa95e" stroke-width="0.9"/><rect x="429.2" y="670.0" width="2.2" height="8.0" fill="#6aa95e"/><line x1="431.9" y1="667.6" x2="431.9" y2="672.8" stroke="#6aa95e" stroke-width="0.9"/><rect x="430.8" y="668.7" width="2.2" height="3.8" fill="#6aa95e"/><line x1="433.6" y1="667.7" x2="433.6" y2="676.9" stroke="#d4653a" stroke-width="0.9"/><rect x="432.5" y="669.1" width="2.2" height="3.3" fill="#d4653a"/><line x1="435.2" y1="668.1" x2="435.2" y2="678.6" stroke="#d4653a" stroke-width="0.9"/><rect x="434.1" y="669.3" width="2.2" height="8.9" fill="#d4653a"/><line x1="436.8" y1="664.4" x2="436.8" y2="681.3" stroke="#6aa95e" stroke-width="0.9"/><rect x="435.7" y="667.6" width="2.2" height="11.7" fill="#6aa95e"/><line x1="438.4" y1="660.2" x2="438.4" y2="672.3" stroke="#6aa95e" stroke-width="0.9"/><rect x="437.3" y="663.0" width="2.2" height="6.3" fill="#6aa95e"/><line x1="440.0" y1="656.4" x2="440.0" y2="662.0" stroke="#d4653a" stroke-width="0.9"/><rect x="438.9" y="659.4" width="2.2" height="2.0" fill="#d4653a"/><line x1="441.7" y1="656.6" x2="441.7" y2="662.8" stroke="#d4653a" stroke-width="0.9"/><rect x="440.6" y="659.1" width="2.2" height="2.0" fill="#d4653a"/><line x1="443.3" y1="655.5" x2="443.3" y2="660.4" stroke="#6aa95e" stroke-width="0.9"/><rect x="442.2" y="656.6" width="2.2" height="2.7" fill="#6aa95e"/><line x1="444.9" y1="656.7" x2="444.9" y2="662.8" stroke="#d4653a" stroke-width="0.9"/><rect x="443.8" y="659.3" width="2.2" height="2.0" fill="#d4653a"/><line x1="446.5" y1="642.5" x2="446.5" y2="665.4" stroke="#6aa95e" stroke-width="0.9"/><rect x="445.4" y="644.7" width="2.2" height="19.6" fill="#6aa95e"/><line x1="448.1" y1="638.1" x2="448.1" y2="650.3" stroke="#d4653a" stroke-width="0.9"/><rect x="447.0" y="642.6" width="2.2" height="7.3" fill="#d4653a"/><line x1="449.8" y1="638.6" x2="449.8" y2="654.5" stroke="#6aa95e" stroke-width="0.9"/><rect x="448.7" y="642.4" width="2.2" height="8.0" fill="#6aa95e"/><line x1="451.4" y1="642.2" x2="451.4" y2="652.0" stroke="#d4653a" stroke-width="0.9"/><rect x="450.3" y="642.7" width="2.2" height="8.4" fill="#d4653a"/><line x1="453.0" y1="646.6" x2="453.0" y2="654.9" stroke="#d4653a" stroke-width="0.9"/><rect x="451.9" y="650.8" width="2.2" height="2.5" fill="#d4653a"/><line x1="454.6" y1="646.9" x2="454.6" y2="655.5" stroke="#6aa95e" stroke-width="0.9"/><rect x="453.5" y="648.1" width="2.2" height="3.9" fill="#6aa95e"/><line x1="456.2" y1="641.9" x2="456.2" y2="650.6" stroke="#6aa95e" stroke-width="0.9"/><rect x="455.1" y="644.6" width="2.2" height="3.3" fill="#6aa95e"/><line x1="457.9" y1="644.0" x2="457.9" y2="647.6" stroke="#6aa95e" stroke-width="0.9"/><rect x="456.8" y="644.7" width="2.2" height="2.0" fill="#6aa95e"/><line x1="459.5" y1="641.3" x2="459.5" y2="648.4" stroke="#6aa95e" stroke-width="0.9"/><rect x="458.4" y="644.2" width="2.2" height="3.3" fill="#6aa95e"/><line x1="461.1" y1="641.2" x2="461.1" y2="647.3" stroke="#d4653a" stroke-width="0.9"/><rect x="460.0" y="644.3" width="2.2" height="2.2" fill="#d4653a"/><line x1="462.7" y1="638.7" x2="462.7" y2="650.0" stroke="#6aa95e" stroke-width="0.9"/><rect x="461.6" y="642.3" width="2.2" height="5.2" fill="#6aa95e"/><line x1="464.3" y1="640.8" x2="464.3" y2="649.7" stroke="#d4653a" stroke-width="0.9"/><rect x="463.2" y="642.6" width="2.2" height="4.6" fill="#d4653a"/><line x1="466.0" y1="646.0" x2="466.0" y2="656.7" stroke="#d4653a" stroke-width="0.9"/><rect x="464.9" y="646.7" width="2.2" height="6.9" fill="#d4653a"/><line x1="467.6" y1="652.9" x2="467.6" y2="668.7" stroke="#d4653a" stroke-width="0.9"/><rect x="466.5" y="654.3" width="2.2" height="10.2" fill="#d4653a"/><line x1="469.2" y1="664.8" x2="469.2" y2="671.9" stroke="#d4653a" stroke-width="0.9"/><rect x="468.1" y="666.4" width="2.2" height="3.6" fill="#d4653a"/><line x1="470.8" y1="664.3" x2="470.8" y2="679.6" stroke="#d4653a" stroke-width="0.9"/><rect x="469.7" y="666.0" width="2.2" height="12.7" fill="#d4653a"/><line x1="472.4" y1="672.7" x2="472.4" y2="681.7" stroke="#6aa95e" stroke-width="0.9"/><rect x="471.3" y="672.8" width="2.2" height="4.9" fill="#6aa95e"/><line x1="474.1" y1="670.8" x2="474.1" y2="678.6" stroke="#6aa95e" stroke-width="0.9"/><rect x="473.0" y="672.6" width="2.2" height="2.0" fill="#6aa95e"/><line x1="475.7" y1="673.3" x2="475.7" y2="681.9" stroke="#d4653a" stroke-width="0.9"/><rect x="474.6" y="673.4" width="2.2" height="6.0" fill="#d4653a"/><line x1="477.3" y1="673.2" x2="477.3" y2="679.5" stroke="#6aa95e" stroke-width="0.9"/><rect x="476.2" y="673.6" width="2.2" height="3.1" fill="#6aa95e"/><line x1="478.9" y1="666.0" x2="478.9" y2="676.3" stroke="#6aa95e" stroke-width="0.9"/><rect x="477.8" y="666.6" width="2.2" height="8.4" fill="#6aa95e"/><line x1="480.5" y1="651.6" x2="480.5" y2="668.4" stroke="#6aa95e" stroke-width="0.9"/><rect x="479.4" y="652.1" width="2.2" height="14.1" fill="#6aa95e"/><line x1="482.2" y1="647.2" x2="482.2" y2="657.3" stroke="#d4653a" stroke-width="0.9"/><rect x="481.1" y="648.1" width="2.2" height="8.6" fill="#d4653a"/><line x1="483.8" y1="653.0" x2="483.8" y2="658.9" stroke="#d4653a" stroke-width="0.9"/><rect x="482.7" y="655.2" width="2.2" height="3.4" fill="#d4653a"/><line x1="485.4" y1="646.5" x2="485.4" y2="660.7" stroke="#6aa95e" stroke-width="0.9"/><rect x="484.3" y="650.6" width="2.2" height="7.3" fill="#6aa95e"/><line x1="487.0" y1="642.1" x2="487.0" y2="650.8" stroke="#6aa95e" stroke-width="0.9"/><rect x="485.9" y="645.6" width="2.2" height="4.1" fill="#6aa95e"/><line x1="488.6" y1="632.1" x2="488.6" y2="648.2" stroke="#6aa95e" stroke-width="0.9"/><rect x="487.5" y="635.9" width="2.2" height="11.5" fill="#6aa95e"/><line x1="490.3" y1="633.8" x2="490.3" y2="639.8" stroke="#6aa95e" stroke-width="0.9"/><rect x="489.2" y="636.1" width="2.2" height="2.0" fill="#6aa95e"/><line x1="491.9" y1="632.7" x2="491.9" y2="642.0" stroke="#6aa95e" stroke-width="0.9"/><rect x="490.8" y="636.0" width="2.2" height="2.0" fill="#6aa95e"/><line x1="493.5" y1="633.5" x2="493.5" y2="641.7" stroke="#d4653a" stroke-width="0.9"/><rect x="492.4" y="636.9" width="2.2" height="4.6" fill="#d4653a"/><line x1="495.1" y1="635.7" x2="495.1" y2="643.4" stroke="#6aa95e" stroke-width="0.9"/><rect x="494.0" y="638.4" width="2.2" height="2.5" fill="#6aa95e"/><line x1="496.7" y1="629.0" x2="496.7" y2="640.1" stroke="#6aa95e" stroke-width="0.9"/><rect x="495.6" y="630.9" width="2.2" height="6.6" fill="#6aa95e"/><line x1="498.4" y1="626.0" x2="498.4" y2="633.9" stroke="#6aa95e" stroke-width="0.9"/><rect x="497.3" y="628.0" width="2.2" height="4.0" fill="#6aa95e"/><line x1="500.0" y1="626.1" x2="500.0" y2="641.7" stroke="#d4653a" stroke-width="0.9"/><rect x="498.9" y="628.3" width="2.2" height="12.3" fill="#d4653a"/><line x1="501.6" y1="635.8" x2="501.6" y2="642.4" stroke="#d4653a" stroke-width="0.9"/><rect x="500.5" y="637.9" width="2.2" height="3.7" fill="#d4653a"/><line x1="503.2" y1="640.5" x2="503.2" y2="645.0" stroke="#d4653a" stroke-width="0.9"/><rect x="502.1" y="641.1" width="2.2" height="2.0" fill="#d4653a"/><line x1="504.8" y1="639.4" x2="504.8" y2="643.9" stroke="#6aa95e" stroke-width="0.9"/><rect x="503.7" y="641.7" width="2.2" height="2.0" fill="#6aa95e"/><line x1="506.5" y1="627.9" x2="506.5" y2="644.9" stroke="#6aa95e" stroke-width="0.9"/><rect x="505.4" y="631.2" width="2.2" height="10.2" fill="#6aa95e"/><line x1="508.1" y1="617.0" x2="508.1" y2="632.9" stroke="#6aa95e" stroke-width="0.9"/><rect x="507.0" y="619.3" width="2.2" height="11.9" fill="#6aa95e"/><line x1="509.7" y1="613.6" x2="509.7" y2="624.0" stroke="#6aa95e" stroke-width="0.9"/><rect x="508.6" y="617.5" width="2.2" height="2.0" fill="#6aa95e"/></g>
<line x1="103" y1="625.5" x2="510" y2="625.5" stroke="#111" stroke-width="1.3"/>
<line x1="505.7" y1="599" x2="505.7" y2="802" stroke="#111" stroke-width="1.5"/>
<!-- payoff -->
<rect x="540" y="600.8" width="436.6" height="89.6" fill="#eaf5e6"/>
<rect x="540" y="690.4" width="436.6" height="9.1" fill="#d6edcf"/>
<rect x="540" y="699.5" width="436.6" height="22.5" fill="#f6cabb"/>
<rect x="540" y="722" width="436.6" height="79.1" fill="#fae4dc"/>
<g stroke="#dcdcdc" stroke-width="1"><line x1="612.5" y1="599" x2="612.5" y2="801"/><line x1="685.5" y1="599" x2="685.5" y2="801"/><line x1="758.5" y1="599" x2="758.5" y2="801"/><line x1="903.5" y1="599" x2="903.5" y2="801"/></g>
<line x1="540" y1="626.3" x2="976.6" y2="626.3" stroke="#444" stroke-width="1.2"/>
<line x1="831.5" y1="599" x2="831.5" y2="801" stroke="#333" stroke-width="1.2"/>
<clipPath id="pc"><rect x="540" y="599" width="437" height="202"/></clipPath>
<g clip-path="url(#pc)" fill="none" stroke="#4a84c8">
<polyline points="566.3,801.0 566.7,799.5 567.1,798.0 567.6,796.5 568.1,795.0 568.6,793.5 569.2,792.0 569.9,790.5 570.6,789.0 571.4,787.5 572.2,786.0 573.1,784.5 574.1,783.0 575.1,781.5 576.2,780.0 577.4,778.5 578.7,777.0 580.1,775.5 581.5,774.0 583.0,772.5 584.7,771.0 586.4,769.5 588.2,768.0 590.1,766.5 592.1,765.0 594.3,763.5 596.5,762.0 598.8,760.5 601.2,759.0 603.8,757.5 606.4,756.0 609.2,754.5 612.0,753.0 615.0,751.5 618.1,750.0 621.3,748.5 624.5,747.0 627.9,745.5 631.4,744.0 635.0,742.5 638.7,741.0 642.5,739.5 646.3,738.0 650.3,736.5 654.3,735.0 658.5,733.5 662.7,732.0 666.9,730.5 671.3,729.0 675.7,727.5 680.1,726.0 684.6,724.5 689.2,723.0 693.8,721.5 698.5,720.0 703.1,718.5 707.8,717.0 712.6,715.5 717.3,714.0 722.1,712.5 726.9,711.0 731.6,709.5 736.4,708.0 741.2,706.5 745.9,705.0 750.6,703.5 755.3,702.0 760.0,700.5 764.7,699.0 769.3,697.5 773.8,696.0 778.3,694.5 782.8,693.0 787.2,691.5 791.6,690.0 795.9,688.5 800.1,687.0 804.3,685.5 808.4,684.0 812.4,682.5 816.4,681.0 820.2,679.5 824.0,678.0 827.8,676.5 831.4,675.0 835.0,673.5 838.4,672.0 841.8,670.5 845.1,669.0 848.3,667.5 851.5,666.0 854.5,664.5 857.5,663.0 860.4,661.5 863.1,660.0 865.8,658.5 868.5,657.0 871.0,655.5 873.5,654.0 875.8,652.5 878.1,651.0 880.3,649.5 882.5,648.0 884.5,646.5 886.5,645.0 888.4,643.5 890.2,642.0 892.0,640.5 893.7,639.0 895.3,637.5 896.8,636.0 898.3,634.5 899.8,633.0 901.1,631.5 902.4,630.0 903.7,628.5 904.9,627.0 906.0,625.5 907.1,624.0 908.2,622.5 909.1,621.0 910.1,619.5 911.0,618.0 911.8,616.5 912.7,615.0 913.4,613.5 914.2,612.0 914.9,610.5 915.5,609.0 916.1,607.5 916.7,606.0 917.3,604.5 917.8,603.0 918.3,601.5 918.8,600.0" stroke-width="2.6" stroke-dasharray="0.01,6.5" stroke-linecap="round"/>
<polyline points="562.8,801.0 562.9,799.5 562.9,798.0 563.0,796.5 563.0,795.0 563.1,793.5 563.2,792.0 563.4,790.5 563.5,789.0 563.7,787.5 563.9,786.0 564.1,784.5 564.4,783.0 564.7,781.5 565.1,780.0 565.5,778.5 565.9,777.0 566.5,775.5 567.1,774.0 567.7,772.5 568.5,771.0 569.3,769.5 570.2,768.0 571.3,766.5 572.4,765.0 573.7,763.5 575.1,762.0 576.6,760.5 578.3,759.0 580.1,757.5 582.1,756.0 584.2,754.5 586.5,753.0 589.0,751.5 591.6,750.0 594.5,748.5 597.5,747.0 600.7,745.5 604.1,744.0 607.7,742.5 611.6,741.0 615.6,739.5 619.8,738.0 624.2,736.5 628.8,735.0 633.6,733.5 638.5,732.0 643.7,730.5 649.0,729.0 654.5,727.5 660.1,726.0 665.9,724.5 671.9,723.0 677.9,721.5 684.1,720.0 690.3,718.5 696.7,717.0 703.1,715.5 709.6,714.0 716.2,712.5 722.7,711.0 729.3,709.5 735.9,708.0 742.5,706.5 749.1,705.0 755.7,703.5 762.2,702.0 768.6,700.5 775.0,699.0 781.3,697.5 787.5,696.0 793.5,694.5 799.5,693.0 805.4,691.5 811.1,690.0 816.7,688.5 822.1,687.0 827.4,685.5 832.6,684.0 837.5,682.5 842.3,681.0 847.0,679.5 851.5,678.0 855.8,676.5 859.9,675.0 863.9,673.5 867.7,672.0 871.4,670.5 874.8,669.0 878.1,667.5 881.3,666.0 884.3,664.5 887.1,663.0 889.8,661.5 892.4,660.0 894.8,658.5 897.0,657.0 899.2,655.5 901.2,654.0 903.1,652.5 904.8,651.0 906.5,649.5 908.0,648.0 909.5,646.5 910.8,645.0 912.1,643.5 913.2,642.0 914.3,640.5 915.3,639.0 916.2,637.5 917.1,636.0 917.9,634.5 918.6,633.0 919.3,631.5 919.9,630.0 920.5,628.5 921.0,627.0 921.5,625.5 921.9,624.0 922.3,622.5 922.7,621.0 923.0,619.5 923.3,618.0 923.6,616.5 923.9,615.0 924.1,613.5 924.3,612.0 924.5,610.5 924.7,609.0 924.8,607.5 924.9,606.0 925.1,604.5 925.2,603.0 925.3,601.5 925.4,600.0" stroke-width="2.2" stroke-dasharray="8,6"/>
<polyline points="925.7,599 925.7,690 561.8,722 561.8,801" stroke-width="2.2"/>
</g>
<!-- trade price history -->
<g stroke="#e6e6e6" stroke-width="1"><line x1="1069" y1="538.5" x2="1365" y2="538.5"/><line x1="1069" y1="580.5" x2="1365" y2="580.5"/><line x1="1069" y1="594.5" x2="1365" y2="594.5"/><line x1="1069" y1="622.5" x2="1365" y2="622.5"/><line x1="1069" y1="649.5" x2="1365" y2="649.5"/><line x1="1069" y1="663.5" x2="1365" y2="663.5"/></g>
<polygon points="1068.9,625.6 1077.0,611.8 1085.2,611.8 1093.5,617.9 1101.9,611.8 1110.0,610.2 1118.0,618.6 1126.5,622.3 1134.6,608.7 1143.0,609.6 1151.3,608.5 1159.5,616.8 1167.6,622.3 1176.0,642.0 1183.6,663.0 1192.0,659.2 1200.3,650.4 1208.5,655.3 1217.0,675.0 1217.5,703.0 1220.6,670.7 1225.0,666.3 1233.1,654.2 1241.4,627.4 1249.6,626.7 1257.9,618.6 1266.1,616.8 1274.2,605.9 1282.6,613.1 1290.9,594.9 1299.0,583.9 1307.4,600.4 1315.5,607.4 1323.9,586.7 1332.0,588.9 1340.2,600.4 1348.1,600.4 1356.2,613.1 1365.0,580.1 1365,703 1068.9,703" fill="#cfe8f1" fill-opacity="0.85"/>
<polyline points="1068.9,625.6 1077.0,611.8 1085.2,611.8 1093.5,617.9 1101.9,611.8 1110.0,610.2 1118.0,618.6 1126.5,622.3 1134.6,608.7 1143.0,609.6 1151.3,608.5 1159.5,616.8 1167.6,622.3 1176.0,642.0 1183.6,663.0 1192.0,659.2 1200.3,650.4 1208.5,655.3 1217.0,675.0 1217.5,703.0 1220.6,670.7 1225.0,666.3 1233.1,654.2 1241.4,627.4 1249.6,626.7 1257.9,618.6 1266.1,616.8 1274.2,605.9 1282.6,613.1 1290.9,594.9 1299.0,583.9 1307.4,600.4 1315.5,607.4 1323.9,586.7 1332.0,588.9 1340.2,600.4 1348.1,600.4 1356.2,613.1 1365.0,580.1" fill="none" stroke="#c8e5ee" stroke-width="1.5"/>
<polyline points="1068.9,646.0 1077.0,634.8 1084.7,636.6 1093.5,639.2 1101.9,640.5 1110.0,639.0 1118.0,642.7 1126.0,645.8 1134.6,638.8 1143.0,638.8 1151.3,637.5 1159.5,643.4 1167.6,636.6 1175.3,662.5 1183.6,675.7 1192.0,682.7 1200.3,661.9 1208.5,659.7 1217.5,702.5 1225.0,671.8 1233.1,669.2 1241.4,633.3 1249.6,640.6 1257.9,631.8 1266.1,617.3 1274.2,614.2 1282.6,617.3 1290.9,614.2 1299.0,607.4 1307.4,611.8 1315.5,613.1 1323.9,613.1 1332.0,613.1 1340.2,613.1 1348.1,571.3 1356.2,569.1 1365.0,607.0" fill="none" stroke="#66a3e6" stroke-width="2.2" stroke-linejoin="round"/>
<line x1="1218" y1="538" x2="1218" y2="703" stroke="#1a4fa8" stroke-width="2"/>
<line x1="1069" y1="703.5" x2="1365" y2="703.5" stroke="#1a4fa8" stroke-width="2.6"/>
<g stroke="#ccd6eb" stroke-width="1"><line x1="1126.5" y1="704" x2="1126.5" y2="713"/><line x1="1208.5" y1="704" x2="1208.5" y2="713"/><line x1="1290.5" y1="704" x2="1290.5" y2="713"/></g>
<!-- stock vol -->
<g stroke="#e6e6e6" stroke-width="1"><line x1="1044" y1="853.5" x2="1424" y2="853.5"/><line x1="1044" y1="884.5" x2="1424" y2="884.5"/><line x1="1044" y1="899.5" x2="1424" y2="899.5"/></g>
<polygon points="1044.1,901.3 1045.5,901.0 1046.8,899.4 1048.2,900.4 1049.6,900.7 1051.0,902.7 1052.4,903.7 1053.8,901.2 1055.1,901.2 1056.5,900.3 1057.9,900.1 1059.2,902.0 1060.6,904.1 1062.0,903.5 1063.3,905.2 1064.7,904.6 1066.1,904.9 1067.4,903.0 1068.8,903.0 1070.5,902.7 1072.3,900.4 1074.0,903.6 1075.7,907.1 1077.1,908.5 1078.4,909.7 1079.8,909.4 1081.2,908.8 1082.5,909.7 1083.9,908.7 1085.3,909.1 1086.7,907.8 1088.0,908.9 1089.4,907.7 1090.8,908.8 1092.1,909.4 1093.5,909.3 1094.9,910.6 1096.3,910.4 1097.6,910.8 1099.0,911.7 1100.4,909.8 1101.8,910.8 1103.1,909.7 1104.5,908.7 1105.9,908.9 1107.3,907.6 1108.7,908.5 1110.0,907.3 1111.4,906.5 1112.8,906.9 1114.2,905.5 1115.5,904.2 1116.9,904.4 1118.2,902.3 1119.6,902.9 1121.0,902.1 1122.4,903.0 1123.8,903.8 1125.1,903.3 1126.5,903.7 1127.9,903.3 1129.3,902.4 1130.6,902.1 1132.0,902.0 1133.4,902.5 1134.7,901.8 1136.1,901.6 1137.5,900.8 1138.8,897.8 1140.2,896.5 1141.6,895.7 1143.0,894.3 1144.3,894.0 1145.7,894.4 1147.1,893.8 1148.4,894.0 1149.8,893.5 1151.2,894.4 1152.5,894.6 1153.9,894.2 1155.3,895.2 1156.6,895.1 1158.0,894.7 1159.4,896.3 1160.8,895.2 1162.2,895.1 1163.5,895.1 1164.9,896.2 1166.3,896.8 1167.7,896.5 1169.0,895.7 1170.4,895.3 1171.8,894.8 1173.1,895.8 1174.5,895.5 1175.9,895.1 1177.3,895.7 1178.7,895.3 1180.0,896.2 1181.4,895.8 1182.8,894.9 1184.2,895.4 1185.5,893.2 1186.9,893.4 1188.3,892.4 1189.7,890.8 1191.0,889.1 1192.3,889.1 1193.7,886.3 1195.1,887.3 1196.5,888.0 1197.8,886.6 1199.2,886.7 1200.6,887.4 1202.0,887.2 1203.4,887.1 1204.7,887.1 1206.1,885.6 1207.5,885.5 1208.8,885.1 1210.2,884.3 1211.6,884.8 1213.0,883.7 1214.3,882.6 1215.7,880.4 1217.1,880.9 1218.5,880.9 1219.8,880.5 1221.2,881.1 1222.6,880.7 1223.9,880.4 1225.3,880.3 1226.7,880.8 1228.1,880.7 1229.4,881.5 1230.8,882.6 1232.2,882.8 1233.6,883.1 1234.9,883.0 1236.3,882.3 1237.6,883.0 1239.0,882.9 1240.6,882.9 1242.1,881.7 1243.7,880.6 1245.1,881.7 1246.5,882.6 1247.8,881.7 1249.2,883.3 1250.6,882.1 1252.0,883.0 1253.4,883.4 1254.7,884.7 1256.1,885.5 1257.5,885.5 1258.8,884.1 1260.2,884.4 1261.6,882.8 1262.9,881.9 1264.3,883.5 1265.7,883.3 1267.0,883.7 1268.4,884.0 1269.8,885.6 1271.2,885.7 1272.5,887.4 1273.9,888.2 1275.3,888.1 1276.7,887.0 1278.1,887.2 1279.4,886.6 1280.8,885.8 1282.2,885.3 1283.6,885.5 1285.0,884.0 1286.3,885.0 1287.7,883.1 1289.0,882.5 1290.4,882.3 1291.8,883.5 1293.1,882.1 1294.5,881.9 1295.8,881.9 1297.2,882.0 1298.6,883.3 1300.0,882.1 1301.4,881.1 1302.8,880.0 1304.8,882.2 1306.9,886.0 1308.3,885.7 1309.7,886.7 1311.0,886.9 1312.4,887.2 1313.8,888.5 1315.1,892.7 1316.5,891.6 1317.8,890.5 1319.2,887.8 1320.6,889.2 1322.0,890.2 1323.3,891.3 1324.7,893.9 1326.1,894.6 1327.5,894.9 1328.8,896.0 1330.2,896.3 1331.6,896.3 1333.0,896.5 1334.3,897.0 1335.7,898.7 1337.1,898.3 1338.5,898.6 1339.8,898.9 1341.2,898.3 1342.6,898.8 1343.9,899.0 1345.3,899.9 1346.7,899.3 1348.0,899.2 1349.4,900.3 1350.8,899.5 1352.1,900.1 1353.5,899.7 1354.9,898.1 1356.3,898.3 1357.6,897.8 1359.0,897.8 1360.4,896.5 1361.8,896.9 1363.2,896.3 1364.5,895.4 1365.9,896.3 1367.3,894.7 1368.7,895.8 1370.0,894.5 1371.4,894.1 1372.7,894.3 1374.1,895.2 1375.5,895.4 1376.9,893.5 1378.2,894.3 1379.6,894.1 1381.0,894.5 1382.4,894.3 1383.8,895.7 1385.1,896.3 1386.5,898.1 1387.9,898.0 1389.3,900.2 1390.6,900.0 1392.0,900.8 1393.4,902.7 1394.8,900.5 1396.1,897.9 1397.5,897.0 1398.9,895.3 1400.2,895.9 1401.6,895.1 1402.9,894.5 1404.3,893.5 1405.7,892.4 1407.0,891.8 1408.4,891.1 1409.8,891.3 1411.2,890.1 1412.5,891.8 1413.9,890.4 1415.3,891.2 1416.7,891.7 1418.1,893.3 1419.4,891.3 1420.8,889.7 1422.2,889.2 1423.5,887.2 1423.5,944 1044.1,944" fill="#d3eaf2"/>
<polyline points="1044.1,900.4 1045.5,900.4 1046.8,900.0 1048.2,900.0 1049.6,901.1 1051.0,902.1 1052.4,902.7 1053.8,901.5 1055.1,900.0 1056.5,900.1 1057.9,901.2 1059.2,902.7 1060.6,903.0 1062.0,904.0 1063.3,905.0 1064.7,905.1 1066.1,903.7 1067.4,903.6 1068.8,903.7 1070.5,901.5 1072.3,900.3 1074.0,903.6 1075.7,907.5 1077.1,909.4 1078.4,909.9 1079.8,909.4 1081.2,909.0 1082.5,908.6 1083.9,908.4 1085.3,907.8 1086.7,908.1 1088.0,907.8 1089.4,909.3 1090.8,909.2 1092.1,908.4 1093.5,910.3 1094.9,909.2 1096.3,910.0 1097.6,911.5 1099.0,911.5 1100.4,910.9 1101.8,909.8 1103.1,908.9 1104.5,909.2 1105.9,907.7 1107.3,907.5 1108.7,907.4 1110.0,906.4 1111.4,906.6 1112.8,906.9 1114.2,905.9 1115.5,904.8 1116.9,904.2 1118.2,903.1 1119.6,901.7 1121.0,902.7 1122.4,902.6 1123.8,903.4 1125.1,903.9 1126.5,903.3 1127.9,903.7 1129.3,903.7 1130.6,902.8 1132.0,902.1 1133.4,902.7 1134.7,902.6 1136.1,902.1 1137.5,900.4 1138.8,899.1 1140.2,897.3 1141.6,895.7 1143.0,895.1 1144.3,894.6 1145.7,894.9 1147.1,893.7 1148.4,894.1 1149.8,894.5 1151.2,894.6 1152.5,894.7 1153.9,894.3 1155.3,894.8 1156.6,895.1 1158.0,895.6 1159.4,895.4 1160.8,895.9 1162.2,896.5 1163.5,895.3 1164.9,896.3 1166.3,896.6 1167.7,895.8 1169.0,895.8 1170.4,896.6 1171.8,894.8 1173.1,895.6 1174.5,894.8 1175.9,895.9 1177.3,896.2 1178.7,895.4 1180.0,894.7 1181.4,895.5 1182.8,895.5 1184.2,895.1 1185.5,894.0 1186.9,893.6 1188.3,893.2 1189.7,891.3 1191.0,889.7 1192.3,889.4 1193.7,886.7 1195.1,887.5 1196.5,887.0 1197.8,887.7 1199.2,886.5 1200.6,888.1 1202.0,886.9 1203.4,886.1 1204.7,886.1 1206.1,886.0 1207.5,884.9 1208.8,885.3 1210.2,885.0 1211.6,884.5 1213.0,882.9 1214.3,881.8 1215.7,880.8 1217.1,880.7 1218.5,881.2 1219.8,880.6 1221.2,880.1 1222.6,881.3 1223.9,880.7 1225.3,880.5 1226.7,880.6 1228.1,882.1 1229.4,882.4 1230.8,882.4 1232.2,882.3 1233.6,882.6 1234.9,882.1 1236.3,883.6 1237.6,882.6 1239.0,883.2 1240.6,882.9 1242.1,882.2 1243.7,880.9 1245.1,881.0 1246.5,881.9 1247.8,881.5 1249.2,883.2 1250.6,882.7 1252.0,884.1 1253.4,883.4 1254.7,884.0 1256.1,884.2 1257.5,885.0 1258.8,883.9 1260.2,882.9 1261.6,883.5 1262.9,882.0 1264.3,882.3 1265.7,882.7 1267.0,883.3 1268.4,883.6 1269.8,885.0 1271.2,886.0 1272.5,886.5 1273.9,888.6 1275.3,888.1 1276.7,886.3 1278.1,887.4 1279.4,887.2 1280.8,886.6 1282.2,885.2 1283.6,885.9 1285.0,885.0 1286.3,883.4 1287.7,882.8 1289.0,884.2 1290.4,883.3 1291.8,882.3 1293.1,881.7 1294.5,881.9 1295.8,882.2 1297.2,883.3 1298.6,882.7 1300.0,881.2 1301.4,881.5 1302.8,880.1 1304.8,882.4 1306.9,886.5 1308.3,886.2 1309.7,886.7 1311.0,886.6 1312.4,887.2 1313.8,889.8 1315.1,892.6 1316.5,890.3 1317.8,890.0 1319.2,888.6 1320.6,890.1 1322.0,890.8 1323.3,892.8 1324.7,893.4 1326.1,893.6 1327.5,894.2 1328.8,894.8 1330.2,896.1 1331.6,895.8 1333.0,897.1 1334.3,897.1 1335.7,898.2 1337.1,898.8 1338.5,899.0 1339.8,899.7 1341.2,898.3 1342.6,899.9 1343.9,899.3 1345.3,899.6 1346.7,899.8 1348.0,900.1 1349.4,899.3 1350.8,899.4 1352.1,900.3 1353.5,898.7 1354.9,899.2 1356.3,898.7 1357.6,897.0 1359.0,897.5 1360.4,897.1 1361.8,897.3 1363.2,895.9 1364.5,896.8 1365.9,895.7 1367.3,895.4 1368.7,896.0 1370.0,894.3 1371.4,895.4 1372.7,895.1 1374.1,894.4 1375.5,895.2 1376.9,894.2 1378.2,894.2 1379.6,894.2 1381.0,894.5 1382.4,894.4 1383.8,895.6 1385.1,896.5 1386.5,897.6 1387.9,899.0 1389.3,899.0 1390.6,901.0 1392.0,901.2 1393.4,902.3 1394.8,900.1 1396.1,898.6 1397.5,897.7 1398.9,896.4 1400.2,895.9 1401.6,894.4 1402.9,893.7 1404.3,892.9 1405.7,892.8 1407.0,892.2 1408.4,891.8 1409.8,889.8 1411.2,891.2 1412.5,891.8 1413.9,891.4 1415.3,890.9 1416.7,891.8 1418.1,891.7 1419.4,890.7 1420.8,890.7 1422.2,888.7 1423.5,887.2" fill="none" stroke="#cbe6ef" stroke-width="1.2"/>
<line x1="1044" y1="914.5" x2="1424" y2="914.5" stroke="#c9dfe8" stroke-width="1"/>
<polyline points="1044.1,912.1 1045.5,913.4 1046.8,914.7 1048.2,915.5 1049.6,915.5 1051.0,915.5 1052.3,915.6 1053.7,915.4 1055.1,915.7 1056.5,915.2 1057.8,916.1 1059.2,915.9 1060.6,916.4 1062.0,915.4 1063.3,915.6 1064.7,915.4 1066.1,916.4 1067.5,916.6 1068.9,916.0 1070.2,915.5 1071.6,915.9 1073.0,915.7 1074.4,914.5 1075.7,913.2 1077.1,912.3 1078.5,912.5 1079.8,912.3 1081.2,912.5 1082.6,912.8 1083.9,913.2 1085.3,912.0 1086.7,913.7 1088.1,913.9 1089.4,914.9 1090.8,916.9 1092.2,917.5 1093.6,915.7 1094.9,912.7 1096.3,909.8 1097.7,910.7 1099.0,911.3 1100.4,912.2 1101.8,912.6 1103.2,911.0 1104.5,910.0 1105.9,908.7 1107.3,908.6 1108.7,908.0 1110.0,907.9 1111.4,907.7 1112.7,907.7 1114.1,908.7 1115.5,909.0 1116.8,911.4 1118.2,911.3 1119.6,912.2 1121.0,910.9 1122.4,910.5 1123.8,913.6 1125.1,915.0 1126.5,917.7 1127.9,917.3 1129.2,917.4 1130.6,918.8 1132.0,919.0 1133.3,921.9 1134.7,924.5 1136.1,925.0 1137.4,927.1 1138.8,928.6 1140.2,927.7 1141.5,927.9 1142.9,926.5 1144.3,927.0 1145.7,927.0 1147.0,926.3 1148.4,926.7 1149.8,927.9 1151.2,929.5 1152.6,929.8 1154.0,930.0 1155.3,930.5 1156.7,929.7 1158.0,930.6 1159.4,929.9 1160.8,929.3 1162.1,929.6 1163.5,929.8 1164.9,929.5 1166.3,929.7 1167.7,928.9 1169.0,929.6 1170.4,928.9 1171.8,929.2 1173.2,930.3 1174.5,931.2 1175.9,932.3 1177.3,932.4 1178.7,932.1 1180.0,931.3 1181.4,930.5 1182.8,929.4 1184.2,928.4 1185.5,929.0 1186.9,928.0 1188.3,927.9 1189.6,926.9 1191.0,927.0 1192.3,927.2 1193.7,926.8 1195.1,926.2 1196.5,925.6 1197.8,925.5 1199.2,925.9 1200.6,925.0 1202.0,925.2 1203.4,925.1 1204.7,925.7 1206.1,925.6 1207.5,925.0 1208.9,924.7 1210.2,925.2 1211.6,925.5 1213.0,926.4 1214.3,927.4 1215.7,928.2 1217.1,926.1 1218.4,926.3 1219.8,925.3 1221.2,926.3 1222.5,926.9 1223.9,927.4 1225.3,927.8 1226.7,927.4 1228.1,926.9 1229.4,926.9 1230.8,925.7 1232.2,925.0 1233.6,925.3 1234.9,925.2 1236.3,923.9 1237.6,924.3 1239.0,924.1 1240.6,923.1 1242.1,923.6 1243.7,923.7 1245.1,923.7 1246.5,923.6 1247.8,924.0 1249.2,925.0 1250.6,925.3 1252.0,925.0 1253.3,924.6 1254.7,925.7 1256.1,925.7 1257.4,925.1 1258.8,925.7 1260.2,925.6 1261.6,925.0 1262.9,924.0 1264.3,923.3 1265.7,922.9 1267.1,923.1 1268.5,923.8 1269.8,924.5 1271.2,925.9 1272.6,926.1 1274.0,925.8 1275.3,925.0 1276.7,924.6 1278.1,923.5 1279.4,922.7 1280.8,923.5 1282.2,922.8 1283.6,922.5 1284.9,923.4 1286.3,923.8 1287.7,923.0 1289.1,923.9 1290.4,923.7 1291.8,924.2 1293.2,923.8 1294.5,924.0 1295.9,925.6 1297.3,925.5 1298.6,925.1 1300.0,925.3 1301.4,925.0 1302.7,925.9 1304.1,925.5 1305.5,911.8 1306.9,911.9 1308.2,912.3 1309.6,912.9 1311.0,912.3 1312.3,908.9 1313.7,906.0 1315.1,906.1 1316.5,906.1 1317.8,906.2 1319.2,907.0 1320.6,907.6 1322.0,906.9 1323.4,907.4 1324.7,907.3 1326.1,905.9 1327.5,906.5 1328.9,906.4 1330.2,906.1 1331.6,907.5 1332.9,906.6 1334.3,907.2 1335.7,911.0 1337.1,915.2 1338.5,914.8 1339.8,914.5 1341.2,914.5 1342.6,914.1 1343.9,920.8 1345.3,920.9 1346.6,919.9 1348.0,919.8 1349.4,920.2 1350.8,920.4 1352.1,921.3 1353.5,921.4 1354.9,921.4 1356.2,920.3 1357.6,921.5 1359.0,921.4 1360.4,921.4 1361.8,922.0 1363.1,920.8 1364.5,921.0 1365.9,923.2 1367.3,924.8 1368.7,924.8 1370.0,924.6 1371.4,925.4 1372.8,926.0 1374.1,925.4 1375.5,926.1 1376.9,926.1 1378.2,926.1 1379.6,926.8 1381.0,926.5 1382.4,926.3 1383.8,925.8 1385.1,926.2 1386.5,924.9 1387.8,924.9 1389.2,923.1 1390.6,922.4 1392.0,923.2 1393.3,921.8 1394.7,922.3 1396.1,921.8 1397.5,921.3 1398.9,919.8 1400.2,919.8 1401.6,918.8 1403.0,919.5 1404.3,918.9 1405.7,918.2 1407.1,917.6 1408.4,917.1 1409.8,917.5 1411.2,916.6 1412.5,916.5 1413.9,915.5 1415.3,916.3 1416.7,916.7 1418.1,918.3 1419.4,917.1 1420.8,915.5 1422.2,917.5 1423.5,918.0" fill="none" stroke="#2e9a3e" stroke-width="2.2" stroke-linejoin="round"/>
<polyline points="1044.1,917.6 1045.5,919.4 1046.8,920.6 1048.2,922.4 1049.6,921.8 1051.0,919.3 1052.4,917.4 1053.8,918.7 1055.1,919.1 1056.5,920.8 1057.8,920.1 1059.2,918.2 1060.6,913.1 1062.0,915.0 1063.4,915.0 1064.7,914.6 1066.1,915.5 1067.5,915.6 1069.1,917.2 1070.7,918.7 1072.3,920.6 1074.0,918.2 1075.7,914.8 1077.1,913.7 1078.4,911.2 1079.8,912.2 1081.2,913.9 1082.6,913.1 1084.0,912.2 1085.3,909.4 1086.7,908.6 1088.1,905.7 1089.4,906.0 1090.8,904.0 1092.2,898.5 1093.5,893.1 1094.9,897.0 1096.3,898.8 1097.7,902.0 1099.0,906.3 1100.4,906.4 1101.7,904.5 1103.1,904.4 1104.5,905.0 1105.9,906.5 1107.3,909.6 1108.6,911.5 1110.0,912.7 1111.4,912.6 1112.8,912.7 1114.1,913.8 1115.5,913.8 1116.9,913.5 1118.3,912.9 1119.6,913.2 1121.0,913.0 1122.4,915.0 1123.7,916.3 1125.1,917.5 1126.5,917.6 1127.8,919.1 1129.2,918.9 1130.6,919.8 1132.0,918.9 1133.3,920.7 1134.7,920.2 1136.1,921.4 1137.5,920.5 1138.8,918.9 1140.2,917.1 1141.6,921.0 1142.9,922.6 1144.3,925.6 1145.7,924.5 1147.1,924.3 1148.4,925.5 1149.8,924.7 1151.2,924.3 1152.6,924.7 1154.0,924.9 1155.3,923.7 1156.7,924.4 1158.0,924.1 1159.4,924.1 1160.8,923.2 1162.1,924.1 1163.5,924.1 1164.9,924.0 1166.2,922.8 1167.6,923.4 1169.0,922.6 1171.1,939.1 1172.5,924.1 1174.1,925.8 1175.7,926.2 1177.3,925.6 1178.7,925.2 1180.0,924.7 1181.4,924.3 1182.8,922.9 1184.1,924.1 1185.5,922.3 1186.9,922.5 1188.2,922.6 1189.6,923.1 1191.0,924.3 1192.3,923.1 1193.7,923.5 1195.1,924.3 1196.5,923.2 1197.8,922.6 1199.2,923.4 1200.6,923.1 1202.0,922.7 1203.3,922.8 1204.7,921.5 1206.1,922.8 1207.5,922.4 1208.8,921.1 1210.2,921.2 1211.6,921.8 1213.0,921.7 1214.3,921.2 1215.7,920.8 1217.1,923.0 1218.5,924.2 1219.9,925.2 1221.2,925.8 1222.6,924.6 1224.0,925.5 1225.3,925.9 1226.7,925.0 1228.1,925.2 1229.5,924.3 1230.8,922.3 1232.2,921.4 1233.6,922.4 1234.9,922.1 1236.3,922.1 1237.6,923.3 1239.0,923.3 1240.6,923.0 1242.1,923.3 1243.7,923.9 1245.1,923.9 1246.5,924.8 1247.8,924.3 1249.2,924.4 1250.6,924.1 1252.0,924.0 1253.4,922.4 1254.7,923.1 1256.1,923.8 1257.5,923.6 1258.9,922.1 1260.2,922.2 1261.6,922.4 1263.0,921.7 1264.3,921.8 1265.7,920.7 1267.1,921.6 1268.4,921.9 1269.8,921.2 1271.2,921.6 1272.6,923.3 1273.9,923.1 1275.3,923.6 1276.7,923.0 1278.1,923.2 1279.4,923.3 1280.8,923.2 1282.2,921.6 1283.6,922.7 1284.9,921.9 1286.3,922.6 1287.7,921.8 1289.1,922.3 1290.4,923.0 1291.8,922.4 1293.2,921.8 1294.6,922.2 1295.9,922.1 1297.3,923.0 1298.7,921.8 1300.0,921.8 1301.4,922.5 1303.1,916.0 1304.8,911.4 1306.5,915.8 1308.2,918.7 1309.6,918.5 1311.0,919.1 1312.4,919.5 1313.8,920.8 1315.1,922.8 1316.5,922.7 1317.8,922.8 1319.2,922.8 1320.6,922.4 1322.0,919.6 1323.3,916.6 1324.7,914.7 1326.1,916.8 1327.4,918.0 1328.8,919.5 1330.2,919.5 1331.5,918.5 1332.9,919.3 1334.3,918.6 1335.7,919.3 1337.0,919.8 1338.4,920.0 1339.8,920.1 1341.2,920.3 1342.5,920.6 1343.9,921.5 1345.3,921.0 1346.6,921.1 1348.0,919.7 1349.4,920.0 1350.8,920.7 1352.1,919.2 1353.5,919.5 1354.9,919.6 1356.3,919.4 1357.6,920.9 1359.0,919.9 1360.4,920.9 1361.8,920.0 1363.2,920.1 1364.5,921.7 1365.9,921.2 1367.3,920.7 1368.7,920.9 1370.0,920.7 1371.4,920.9 1372.8,919.4 1374.1,919.3 1375.5,920.2 1376.8,919.5 1378.2,918.1 1379.6,918.1 1381.0,917.8 1382.3,918.0 1383.7,917.6 1385.1,916.9 1386.5,915.6 1387.9,913.9 1389.3,913.8 1390.7,913.3 1392.0,912.9 1393.4,911.9 1394.8,912.8 1396.1,913.1 1397.5,913.8 1398.8,912.8 1400.2,914.6 1401.6,913.6 1403.0,915.5 1404.3,915.7 1405.7,916.1 1407.1,917.5 1408.5,918.0 1409.8,919.0 1411.2,920.8 1412.6,922.2 1414.0,921.8 1415.3,921.5 1416.7,921.7 1418.0,921.8 1419.4,922.3 1420.8,921.7 1422.1,921.9 1423.5,922.2" fill="none" stroke="#3b8ad0" stroke-width="2.2" stroke-linejoin="round"/>
<line x1="1044" y1="919.8" x2="1424" y2="919.8" stroke="#f5c062" stroke-width="2.6"/>
<line x1="1044" y1="944.5" x2="1424" y2="944.5" stroke="#ccd6eb" stroke-width="1"/>
<g stroke="#ccd6eb" stroke-width="1"><line x1="1100.5" y1="945" x2="1100.5" y2="953"/><line x1="1161.5" y1="945" x2="1161.5" y2="953"/><line x1="1225.5" y1="945" x2="1225.5" y2="953"/><line x1="1288.5" y1="945" x2="1288.5" y2="953"/><line x1="1354.5" y1="945" x2="1354.5" y2="953"/><line x1="1420.5" y1="945" x2="1420.5" y2="953"/></g>
</svg>

<!-- chart labels -->
<div class="t" style="left:145px;top:812px;font-size:11px;color:#444;letter-spacing:0.35px">Jan '19</div>
<div class="t" style="left:210px;top:812px;font-size:11px;color:#444;letter-spacing:0.35px">Mar '19</div>
<div class="t" style="left:277px;top:812px;font-size:11px;color:#444;letter-spacing:0.35px">May '19</div>
<div class="t" style="left:347px;top:812px;font-size:11px;color:#444;letter-spacing:0.35px">Jul '19</div>
<div class="t" style="left:415px;top:812px;font-size:11px;color:#444;letter-spacing:0.35px">Sep '19</div>
<div class="t" style="left:486px;top:812px;font-size:11px;color:#444;letter-spacing:0.35px">Nov '19</div>
<div class="t" style="left:513px;top:658px;font-size:11px;color:#444;letter-spacing:0.35px">175</div>
<div class="t" style="left:513px;top:723px;font-size:11px;color:#444;letter-spacing:0.35px">150</div>
<div class="t" style="left:513px;top:788px;font-size:11px;color:#444;letter-spacing:0.35px">125</div>
<div class="t" style="left:540px;top:812px;font-size:11px;color:#444;letter-spacing:0.35px">-1000</div>
<div class="t" style="left:613px;top:812px;font-size:11px;color:#444;letter-spacing:0.35px">-750</div>
<div class="t" style="left:686px;top:812px;font-size:11px;color:#444;letter-spacing:0.35px">-500</div>
<div class="t" style="left:758px;top:812px;font-size:11px;color:#444;letter-spacing:0.35px">-250</div>
<div class="t" style="left:831px;top:812px;font-size:11px;color:#444;letter-spacing:0.35px">0</div>
<div class="t" style="left:904px;top:812px;font-size:11px;color:#444;letter-spacing:0.35px">250</div>

<div class="t ttl" style="left:104px;top:866px;font-size:18px;letter-spacing:0px">P/L</div>
<div class="t" style="left:552px;top:862px;font-size:14px;color:#444;letter-spacing:0.25px">Reward Ratio:0.35:1 (35.14%)</div>
<div class="t" style="left:150px;top:906.5px;font-size:14px;color:#888;letter-spacing:0.7px;line-height:20.8px">Net Credit<br>Breakeven<br>Max Reward<br>Max Risk</div>
<div class="t" style="left:323px;top:906.5px;font-size:14px;color:#444;letter-spacing:0.7px;line-height:20.8px">3.25<br>161.75<br>$325.00<br>$925.00</div>
<div class="t" style="left:470px;top:906.5px;font-size:14px;color:#888;letter-spacing:0.7px;line-height:20.8px">Total Credit<br>&nbsp;<br>Stock<br>Stock</div>
<div class="t" style="left:640px;top:906.5px;font-size:14px;color:#444;letter-spacing:0.7px;line-height:20.8px">$325.00<br>&nbsp;<br>&gt;=165.00<br>&lt;=152.50</div>
<div class="t ttl" style="left:772px;top:862px;font-size:18px;letter-spacing:0.1px">Analytics</div>
<div class="t" style="left:803px;top:906.5px;font-size:14px;color:#888;letter-spacing:0.9px;line-height:20.8px">Delta<br>Gamma<br>Theta<br>Vega</div>
<div class="t" style="left:880px;top:906.5px;width:66px;text-align:right;font-size:14px;color:#444;letter-spacing:0.7px;line-height:20.8px">0.24<br>-0.01<br>0.04<br>-0.05</div>

<div class="t ttl" style="left:1001px;top:111px;font-size:18px;letter-spacing:0.07px">Back Test Analysis</div>
<div class="t" style="left:1005px;top:159px;font-size:15.5px;color:#444;letter-spacing:-0.1px">Type</div>
<div class="t" style="left:1109px;top:159px;font-size:15.5px;color:#444;letter-spacing:-0.45px">Qty</div>
<div class="t" style="left:1199px;top:159px;font-size:15.5px;color:#444;letter-spacing:-0.6px">Exp</div>
<div class="t" style="left:1285px;top:159px;font-size:15.5px;color:#444;letter-spacing:0.9px">Strike</div>
<div class="t" style="left:1384px;top:159px;font-size:15.5px;color:#444;letter-spacing:0.9px">Value</div>
<div class="t" style="left:1001px;top:183px;font-size:14px;color:#444;letter-spacing:0.7px;line-height:26px">PUT<br>PUT</div>
<div class="t" style="left:1090px;top:183px;width:60px;text-align:center;font-size:14px;color:#444;letter-spacing:0.7px;line-height:26px">1<br>-1</div>
<div class="t" style="left:1189px;top:183px;font-size:14px;color:#444;letter-spacing:0.7px;line-height:26px">Nov 01<br>Nov 01</div>
<div class="t" style="left:1276px;top:183px;width:60px;text-align:center;font-size:14px;color:#444;letter-spacing:0.7px;line-height:26px">152.5<br>165</div>
<div class="t" style="left:1368px;top:183px;width:60px;text-align:right;font-size:14px;color:#444;letter-spacing:0.7px;line-height:26px">0.00<br>0.00</div>
<div class="t" style="left:1300px;top:304px;font-size:14px;color:#444;font-weight:bold;letter-spacing:0.35px">Total:0.00&nbsp; Net:0.00</div>
<div class="t" style="left:1001px;top:339px;font-size:14px;color:#444;font-weight:bold;letter-spacing:0px">Analysis</div>
<div class="t" style="left:1001px;top:353.5px;font-size:14px;color:#444;letter-spacing:0.7px;line-height:25px">Current $:<br>Entry Cost:<br>Profit(loss):</div>
<div class="t" style="left:1148px;top:409px;font-size:14px;color:#1aa64a;letter-spacing:0.5px">100.00%</div>
<div class="t" style="left:1290px;top:353.5px;width:78px;text-align:right;font-size:14px;color:#444;letter-spacing:0.7px;line-height:25px">0.00<br>-325.00<br>325.00</div>
<div class="t" style="left:1372px;top:353.5px;width:61px;text-align:right;font-size:14px;color:#444;letter-spacing:0.7px;line-height:25px">0.00<br>-3.25<br>3.25</div>

<div class="t ttl" style="left:1010px;top:444px;font-size:18px;letter-spacing:0px">Trade Price History</div>
<div class="a" style="left:1067px;top:506px;width:16px;height:2px;background:#6aa5e6"></div>
<div class="t" style="left:1088px;top:501px;font-size:11.5px;color:#444;font-weight:bold;letter-spacing:0.33px">Trade</div>
<div class="a" style="left:1149px;top:500px;width:12px;height:12px;border-radius:50%;background:#d3eaf2"></div>
<div class="t" style="left:1168px;top:501px;font-size:11.5px;color:#444;font-weight:bold;letter-spacing:-0.2px">NSC</div>
<div class="a" style="left:1227px;top:506px;width:16px;height:2px;background:#ccc"></div>
<div class="t" style="left:1248px;top:501px;font-size:11.5px;color:#ccc;font-weight:bold;letter-spacing:0.6px">delta</div>
<div class="a" style="left:1307px;top:506px;width:16px;height:2px;background:#ccc"></div>
<div class="t" style="left:1328px;top:501px;font-size:11.5px;color:#ccc;font-weight:bold;letter-spacing:-0.05px">gamma</div>
<div class="a" style="left:1067px;top:520px;width:16px;height:2px;background:#ccc"></div>
<div class="t" style="left:1088px;top:515px;font-size:11.5px;color:#ccc;font-weight:bold;letter-spacing:0.6px">vega</div>
<div class="a" style="left:1147px;top:520px;width:16px;height:2px;background:#ccc"></div>
<div class="t" style="left:1168px;top:515px;font-size:11.5px;color:#ccc;font-weight:bold;letter-spacing:0.6px">theta</div>
<div class="a" style="left:1227px;top:520px;width:16px;height:2px;background:#ccc"></div>
<div class="t" style="left:1248px;top:515px;font-size:11.5px;color:#ccc;font-weight:bold;letter-spacing:0.6px">iv</div>
<div class="t" style="left:1019px;top:569px;font-size:11px;color:#444;letter-spacing:0.35px">190.00</div>
<div class="t" style="left:1019px;top:611px;font-size:11px;color:#444;letter-spacing:0.35px">180.00</div>
<div class="t" style="left:1019px;top:652px;font-size:11px;color:#444;letter-spacing:0.35px">170.00</div>
<div class="t" style="left:1019px;top:693px;font-size:11px;color:#444;letter-spacing:0.35px">160.00</div>
<div class="t" style="left:1380px;top:583px;font-size:11px;color:#444;letter-spacing:0.35px">400.00</div>
<div class="t" style="left:1380px;top:638px;font-size:11px;color:#444;letter-spacing:0.35px">200.00</div>
<div class="t" style="left:1380px;top:693px;font-size:11px;color:#444;letter-spacing:0.35px">0.00</div>
<div class="t" style="left:1107px;top:714px;font-size:11px;color:#444;letter-spacing:0.35px">23. Sep</div>
<div class="t" style="left:1193px;top:714px;font-size:11px;color:#444;letter-spacing:0.35px">7. Oct</div>
<div class="t" style="left:1272px;top:714px;font-size:11px;color:#444;letter-spacing:0.35px">21. Oct</div>

<div class="t ttl" style="left:1001px;top:777px;font-size:18px;letter-spacing:0.37px">Stock/Volatility Chart</div>
<div class="a" style="left:1086px;top:831px;width:12px;height:12px;border-radius:50%;background:#d3eaf2"></div>
<div class="t" style="left:1105px;top:832px;font-size:11.5px;color:#444;font-weight:bold;letter-spacing:-0.2px">NSC</div>
<div class="a" style="left:1130px;top:837px;width:16px;height:2px;background:#2e9a3e"></div>
<div class="t" style="left:1152px;top:832px;font-size:11.5px;color:#444;font-weight:bold;letter-spacing:0.6px">hv 27.69</div>
<div class="a" style="left:1203px;top:837px;width:16px;height:2px;background:#3b8ad0"></div>
<div class="t" style="left:1224px;top:832px;font-size:11.5px;color:#444;font-weight:bold;letter-spacing:0.6px">iv 24.67</div>
<div class="a" style="left:1273px;top:837px;width:16px;height:2px;background:#f5c062"></div>
<div class="t" style="left:1294px;top:832px;font-size:11.5px;color:#444;font-weight:bold;letter-spacing:0.6px">avg(iv) 27</div>
<div class="t" style="left:1016px;top:888px;font-size:11px;color:#444;letter-spacing:0.35px">50</div>
<div class="t" style="left:1022px;top:933px;font-size:11px;color:#444;letter-spacing:0.35px">0</div>
<div class="t" style="left:1405px;top:873px;font-size:11px;color:#444;letter-spacing:0.35px">200</div>
<div class="t" style="left:1405px;top:903px;font-size:11px;color:#444;letter-spacing:0.35px">150</div>
<div class="t" style="left:1405px;top:933px;font-size:11px;color:#444;letter-spacing:0.35px">100</div>
<div class="t" style="left:1081px;top:954px;font-size:11px;color:#444;letter-spacing:0.35px">Jan '19</div>
<div class="t" style="left:1142px;top:954px;font-size:11px;color:#444;letter-spacing:0.35px">Mar '19</div>
<div class="t" style="left:1205px;top:954px;font-size:11px;color:#444;letter-spacing:0.35px">May '19</div>
<div class="t" style="left:1272px;top:954px;font-size:11px;color:#444;letter-spacing:0.35px">Jul '19</div>
<div class="t" style="left:1336px;top:954px;font-size:11px;color:#444;letter-spacing:0.35px">Sep '19</div>
<div class="t" style="left:1386px;top:954px;font-size:11px;color:#444;letter-spacing:0.35px">Nov '19</div>

<!-- FOOTER -->
<div class="btn" style="left:15px;top:997px;width:98px;height:39px;border:1px solid #fff;border-top:none;border-left:none"></div>
<svg class="a" style="left:23px;top:1007px" width="18" height="18" viewBox="0 0 18 18"><rect x="0.5" y="0.5" width="17" height="17" fill="#333"/><rect x="1.5" y="1.5" width="7" height="7" fill="#2aa84a"/><rect x="9.5" y="1.5" width="7" height="7" fill="#e03a2a"/><rect x="1.5" y="9.5" width="7" height="7" fill="#e8e000"/><rect x="9.5" y="9.5" width="7" height="7" fill="#2aa84a"/><circle cx="13" cy="5" r="2" fill="none" stroke="#fff" stroke-width="1"/></svg>
<div class="t" style="left:48px;top:1008px;font-size:13px;color:#fff;letter-spacing:0.5px">MANUAL</div>
<div class="t" style="left:668px;top:1010px;font-size:12px;color:#2a5f9e;letter-spacing:0.15px">Copyright © 2019 - All Rights Reserved | Privacy Policy | User Agreement</div>
<div class="a" style="left:1076px;top:1004px;width:89px;height:27px;background:#fff"></div>
<svg class="a" style="left:1089px;top:1009px" width="19" height="18" viewBox="0 0 19 18"><rect width="19" height="18" rx="2" fill="#7ccc7c"/><path d="M2,13 L7,8 L11,10 L17,4 V7 L11,13 L7,11 L2,16 Z" fill="#c5eac5"/><path d="M2,9 L7,4 L11,6 L17,2 V4 L11,8 L7,6 L2,11Z" fill="#c5eac5"/></svg>
<div class="t" style="left:1113px;top:1009px;font-size:14px;color:#555;letter-spacing:0px">Legend</div>
<div class="a" style="left:1172px;top:1004px;width:269px;height:28px;background:#fff"></div>
<div class="a" style="left:1182px;top:1008px;width:20px;height:20px;background:#cbcbcb;border-radius:2px"></div>
<div class="t" style="left:1205px;top:1010px;font-size:13.5px;color:#555;letter-spacing:0.07px">Quotes by: After Hours</div>
<svg class="a" style="left:1354px;top:1009px" width="12" height="14" viewBox="0 0 12 14"><path d="M3,6 V4 A3,3 0 0 1 9,4" fill="none" stroke="#555" stroke-width="1.6"/><rect x="1" y="6" width="9" height="6" fill="#555"/></svg>

<svg class="a" style="left:0;top:1036px" width="1457" height="10" viewBox="0 1036 1457 10"><path d="M0,1046 V1039 A7,7 0 0 0 7,1046 Z" fill="#1a1a1a"/><path d="M1457,1046 V1039 A7,7 0 0 1 1450,1046 Z" fill="#1a1a1a"/></svg>
</body></html>
